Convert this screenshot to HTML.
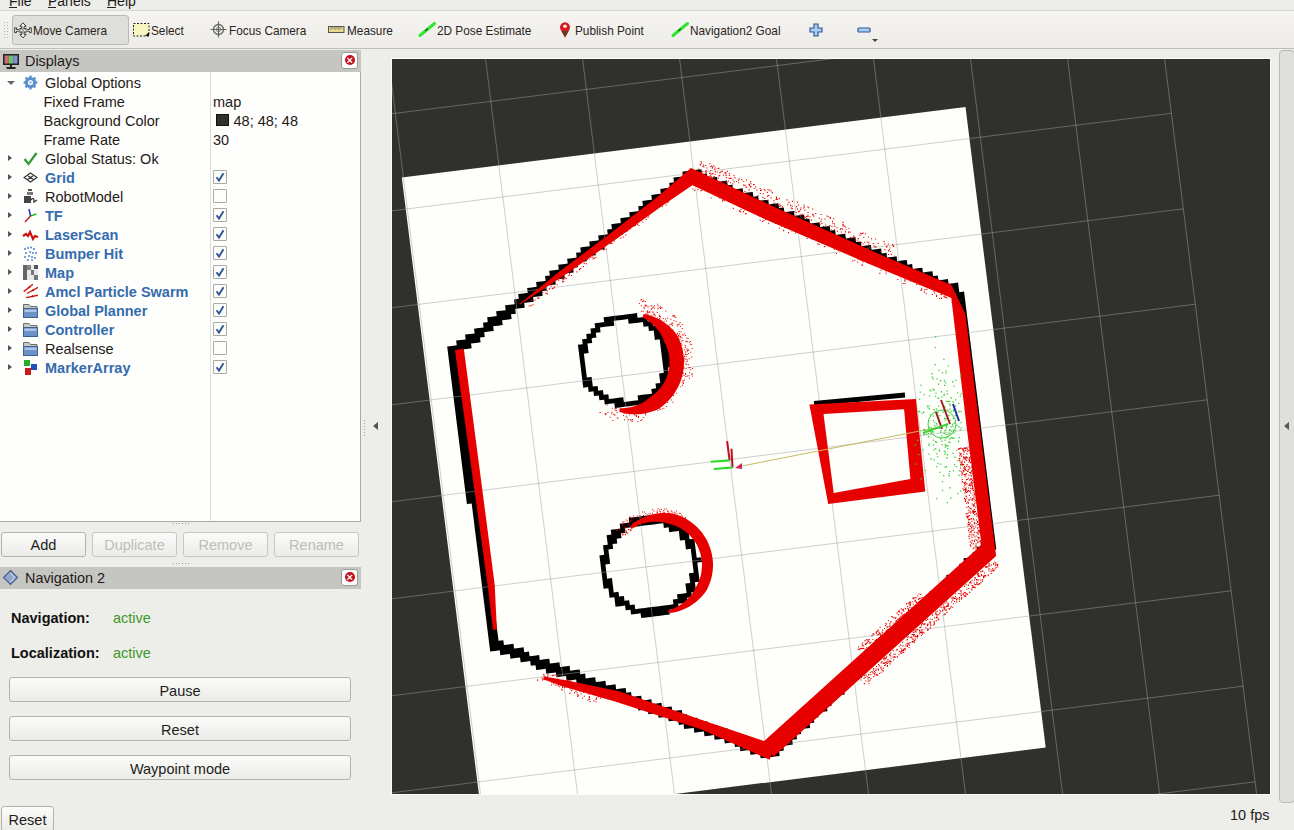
<!DOCTYPE html>
<html><head><meta charset="utf-8">
<style>
*{box-sizing:border-box;margin:0;padding:0}
html,body{width:1294px;height:830px;overflow:hidden;background:#edede9;font-family:"Liberation Sans",sans-serif;color:#1e1a17}
.a{position:absolute}
.t{position:absolute;white-space:nowrap;line-height:1}
#menubar{left:0;top:0;width:1294px;height:11px;background:#edede9;border-bottom:1px solid #d6d6d2}
#toolbar{left:0;top:11px;width:1294px;height:38px;background:linear-gradient(#f5f4f1,#edece8);border-bottom:1px solid #bdbdb9}
.tb{font-size:11.8px;color:#2a2522;transform:scaleY(1.1);transform-origin:0 0}
.btn{position:absolute;border:1px solid #b3b3ae;border-radius:3px;background:linear-gradient(#fbfbfa,#ebebe8);font-size:14.5px;color:#221d1a;text-align:center}
.btn.dis{color:#bdbdb9;border-color:#c6c6c2}
.title{position:absolute;left:0;width:361px;height:22px;background:#c5c5c1}
.close{position:absolute;width:17px;height:17px;border:1px solid #9a9a96;border-radius:3px;background:#fdfdfc}
.close::after{content:"";position:absolute;left:3px;top:2px;width:10px;height:10px;border-radius:50%;background:#c4101e}
.close::before{content:"\00d7";position:absolute;left:4.5px;top:-0.5px;font-size:11px;line-height:14px;color:#fff;z-index:2;font-weight:bold}
.tr{font-size:14.5px}
.bl{font-weight:bold;color:#356cae}
.arr{position:absolute;width:0;height:0;border-top:3.5px solid transparent;border-bottom:3.5px solid transparent;border-left:4px solid #555}
.arrd{position:absolute;width:0;height:0;border-left:4px solid transparent;border-right:4px solid transparent;border-top:4px solid #666}
.cb{position:absolute;left:213px;width:14px;height:14px;border:1px solid #a9a9a5;border-radius:1px;background:#fdfdfc}
.dots{position:absolute;width:16px;height:1px;background:repeating-linear-gradient(90deg,#9e9e9a 0 1px,transparent 1px 3px)}
</style></head><body>
<!-- menu bar -->
<div id="menubar" class="a">
  <div class="t" style="left:9px;top:-6px;font-size:14px">File</div>
  <div class="t" style="left:48px;top:-6px;font-size:14px">Panels</div>
  <div class="t" style="left:107px;top:-6px;font-size:14px">Help</div>
  <div class="a" style="left:9px;top:7px;width:8px;height:1px;background:#222"></div>
  <div class="a" style="left:48px;top:7px;width:8px;height:1px;background:#222"></div>
  <div class="a" style="left:107px;top:7px;width:9px;height:1px;background:#222"></div>
</div>
<!-- toolbar -->
<div id="toolbar" class="a">
  <svg class="a" style="left:3px;top:10px" width="6" height="19" viewBox="0 0 6 19"><rect x="1" y="1" width="1" height="1" fill="#b5b5b1"/><rect x="1" y="4" width="1" height="1" fill="#b5b5b1"/><rect x="1" y="7" width="1" height="1" fill="#b5b5b1"/><rect x="1" y="10" width="1" height="1" fill="#b5b5b1"/><rect x="1" y="13" width="1" height="1" fill="#b5b5b1"/><rect x="1" y="16" width="1" height="1" fill="#b5b5b1"/><rect x="4" y="1" width="1" height="1" fill="#b5b5b1"/><rect x="4" y="4" width="1" height="1" fill="#b5b5b1"/><rect x="4" y="7" width="1" height="1" fill="#b5b5b1"/><rect x="4" y="10" width="1" height="1" fill="#b5b5b1"/><rect x="4" y="13" width="1" height="1" fill="#b5b5b1"/><rect x="4" y="16" width="1" height="1" fill="#b5b5b1"/></svg>
  <div class="a" style="left:12px;top:4px;width:117px;height:30px;border:1px solid #b9b9b5;border-radius:3px;background:#dededb"></div>
  <div class="t tb" style="left:33px;top:14px">Move Camera</div>
  <div class="t tb" style="left:151px;top:14px">Select</div>
  <div class="t tb" style="left:229px;top:14px">Focus Camera</div>
  <div class="t tb" style="left:347px;top:14px">Measure</div>
  <div class="t tb" style="left:437px;top:14px">2D Pose Estimate</div>
  <div class="t tb" style="left:575px;top:14px">Publish Point</div>
  <div class="t tb" style="left:690px;top:14px">Navigation2 Goal</div>
  
<svg class="a" style="left:14px;top:11px" width="18" height="17" viewBox="0 0 18 17"><path d="M9 0.8 L12.2 4.2 L10.2 4.2 L10.2 6.2 Q12.5 6.5 13.2 7.5 L15.5 7.5 L15.5 5.8 L17.3 5.8 L17.3 10.6 L15.5 10.6 L15.5 9.2 L13.2 9.2 Q12.5 10.3 10.2 10.6 L10.2 12.4 L12.2 12.4 L9 15.9 L5.8 12.4 L7.8 12.4 L7.8 10.6 Q5.5 10.3 4.8 9.2 L2.5 9.2 L2.5 10.6 L0.7 10.6 L0.7 5.8 L2.5 5.8 L2.5 7.5 L4.8 7.5 Q5.5 6.5 7.8 6.2 L7.8 4.2 L5.8 4.2 Z" fill="#f4f4f2" stroke="#3a3a3a" stroke-width="1"/><ellipse cx="9" cy="8.4" rx="3.2" ry="1.6" fill="none" stroke="#555" stroke-width="0.8"/><path d="M9 5 V12" stroke="#999" stroke-width="1.4"/></svg>
<svg class="a" style="left:133px;top:12px" width="17" height="14" viewBox="0 0 17 14"><rect x="0.5" y="0.5" width="15.5" height="12.5" fill="#f7f5c0" stroke="#222" stroke-width="1" stroke-dasharray="2 1.5"/><path d="M16 9 L16 13 L12 13 Z" fill="#111"/></svg>
<svg class="a" style="left:210px;top:10px" width="17" height="17" viewBox="0 0 17 17"><circle cx="8.5" cy="8.5" r="5" fill="none" stroke="#666" stroke-width="1.3"/><circle cx="8.5" cy="8.5" r="2.2" fill="none" stroke="#888" stroke-width="1"/><path d="M8.5 0.5 V16.5 M0.5 8.5 H16.5" stroke="#666" stroke-width="1.2"/></svg>
<svg class="a" style="left:328px;top:15px" width="17" height="8" viewBox="0 0 17 8"><rect x="0.5" y="0.5" width="15.5" height="6" fill="#e8d890" stroke="#555" stroke-width="1"/><path d="M3 1 V4 M5 1 V3 M7 1 V4 M9 1 V3 M11 1 V4 M13 1 V3" stroke="#665" stroke-width="0.7"/></svg>
<svg class="a" style="left:418px;top:11px" width="18" height="15" viewBox="0 0 18 15"><path d="M2 13.5 L16.5 1.5" stroke="#2ee82e" stroke-width="3" stroke-linecap="round"/><path d="M7 9 L10 6.5" stroke="#1a6a1a" stroke-width="1.5"/></svg>
<svg class="a" style="left:559px;top:10px" width="12" height="17" viewBox="0 0 12 17"><path d="M6 16.5 L1.5 8.5 A5 5 0 1 1 10.5 8.5 Z" fill="#d41a2a"/><path d="M6 16.5 L2.5 10 L9.5 10 Z" fill="#6a3a20"/><circle cx="6" cy="5.2" r="1.8" fill="#f7f0d0"/></svg>
<svg class="a" style="left:671px;top:11px" width="18" height="15" viewBox="0 0 18 15"><path d="M2 13.5 L16.5 1.5" stroke="#2ee82e" stroke-width="3" stroke-linecap="round"/><path d="M7 9 L10 6.5" stroke="#1a6a1a" stroke-width="1.5"/></svg>
<svg class="a" style="left:809px;top:12px" width="14" height="14" viewBox="0 0 14 14"><path d="M5 1 H9 V5 H13 V9 H9 V13 H5 V9 H1 V5 H5 Z" fill="#a8cdf0" stroke="#2d5a98" stroke-width="1.2"/></svg>
<svg class="a" style="left:857px;top:16px" width="14" height="6" viewBox="0 0 14 6"><rect x="1" y="1" width="12" height="4" rx="0.8" fill="#a8cdf0" stroke="#2d5a98" stroke-width="1.2"/></svg>
<div class="a" style="left:872px;top:28px;width:0;height:0;border-left:3px solid transparent;border-right:3px solid transparent;border-top:3px solid #444"></div>

</div>
<!-- Displays panel -->
<div class="title" style="top:50px"></div>
<div class="t" style="left:25px;top:54px;font-size:14.4px">Displays</div>
<div class="close" style="left:341px;top:52px"></div>
<svg class="a" style="left:2px;top:53px" width="18" height="17" viewBox="0 0 18 17"><rect x="1" y="1" width="16" height="11" fill="#222"/><rect x="2.5" y="2.5" width="4.3" height="8" fill="#c87070"/><rect x="6.8" y="2.5" width="4.4" height="8" fill="#70c070"/><rect x="11.2" y="2.5" width="4.3" height="8" fill="#8090d0"/><rect x="8" y="12" width="2" height="2" fill="#222"/><rect x="4.5" y="14" width="9" height="2" fill="#222"/></svg>
<div class="a" style="left:0;top:72px;width:361px;height:450px;background:#fefefc;border-right:1px solid #a9a9a5;border-bottom:1px solid #a9a9a5"></div>
<div class="a" style="left:210px;top:72px;width:1px;height:449px;background:#dcdcd8"></div>
<div class="t tr" style="left:45px;top:76px">Global Options</div>
<div class="arrd" style="left:7px;top:81px"></div>
<svg class="a" style="left:22px;top:74px" width="17" height="17" viewBox="0 0 17 17"><g fill="#5b8fd0"><circle cx="8.5" cy="8.5" r="5.6"/><rect x="7.3" y="1.6" width="2.4" height="3" transform="rotate(0 8.5 8.5)"/><rect x="7.3" y="1.6" width="2.4" height="3" transform="rotate(45 8.5 8.5)"/><rect x="7.3" y="1.6" width="2.4" height="3" transform="rotate(90 8.5 8.5)"/><rect x="7.3" y="1.6" width="2.4" height="3" transform="rotate(135 8.5 8.5)"/><rect x="7.3" y="1.6" width="2.4" height="3" transform="rotate(180 8.5 8.5)"/><rect x="7.3" y="1.6" width="2.4" height="3" transform="rotate(225 8.5 8.5)"/><rect x="7.3" y="1.6" width="2.4" height="3" transform="rotate(270 8.5 8.5)"/><rect x="7.3" y="1.6" width="2.4" height="3" transform="rotate(315 8.5 8.5)"/></g><circle cx="8.5" cy="8.5" r="2.6" fill="#fefefc"/><circle cx="8.5" cy="8.5" r="1.4" fill="#a9c6ea"/></svg>
<div class="t tr" style="left:43.5px;top:95px">Fixed Frame</div>
<div class="t tr" style="left:213px;top:95px">map</div>
<div class="t tr" style="left:43.5px;top:114px">Background Color</div>
<div class="a" style="left:216px;top:114px;width:13px;height:12px;background:#30302e;border:1px solid #111"></div>
<div class="t tr" style="left:233.5px;top:114px">48; 48; 48</div>
<div class="t tr" style="left:43.5px;top:133px">Frame Rate</div>
<div class="t tr" style="left:213px;top:133px">30</div>
<div class="t tr" style="left:45px;top:152px">Global Status: Ok</div>
<div class="arr" style="left:8px;top:155px"></div>
<svg class="a" style="left:22px;top:150px" width="17" height="17" viewBox="0 0 17 17"><path d="M2.5 9 L6.5 14 L14.5 3" stroke="#2e9a2e" stroke-width="2.2" fill="none"/></svg>
<div class="t tr bl" style="left:45px;top:171px">Grid</div>
<div class="arr" style="left:8px;top:174px"></div>
<svg class="a" style="left:22px;top:169px" width="17" height="17" viewBox="0 0 17 17"><path d="M8.5 4 L15 8.5 L8.5 13 L2 8.5 Z M5.2 6.2 L11.8 10.8 M11.8 6.2 L5.2 10.8" stroke="#333" stroke-width="1.1" fill="none"/></svg>
<div class="cb" style="top:170px"></div>
<svg class="a" style="left:213px;top:170px" width="14" height="14" viewBox="0 0 14 14"><path d="M3.5 7.2 L6 10.5 L10.5 3.2" stroke="#2d5594" stroke-width="1.9" fill="none"/></svg>
<div class="t tr" style="left:45px;top:190px">RobotModel</div>
<div class="arr" style="left:8px;top:193px"></div>
<svg class="a" style="left:22px;top:188px" width="17" height="17" viewBox="0 0 17 17"><rect x="6" y="1" width="4" height="2" fill="#555"/><rect x="5" y="4" width="6" height="3" fill="#777"/><rect x="2" y="8" width="7" height="7" fill="#444"/><path d="M9 12 Q12 8 12 14 L15 12" stroke="#333" stroke-width="1.3" fill="none"/></svg>
<div class="cb" style="top:189px"></div>
<div class="t tr bl" style="left:45px;top:209px">TF</div>
<div class="arr" style="left:8px;top:212px"></div>
<svg class="a" style="left:22px;top:207px" width="17" height="17" viewBox="0 0 17 17"><path d="M8.5 9 L3 15" stroke="#d02020" stroke-width="1.5"/><path d="M8.5 9 L14.5 7" stroke="#20c020" stroke-width="1.5"/><path d="M8.5 9 L7 2" stroke="#2030c0" stroke-width="1.5"/></svg>
<div class="cb" style="top:208px"></div>
<svg class="a" style="left:213px;top:208px" width="14" height="14" viewBox="0 0 14 14"><path d="M3.5 7.2 L6 10.5 L10.5 3.2" stroke="#2d5594" stroke-width="1.9" fill="none"/></svg>
<div class="t tr bl" style="left:45px;top:228px">LaserScan</div>
<div class="arr" style="left:8px;top:231px"></div>
<svg class="a" style="left:22px;top:226px" width="17" height="17" viewBox="0 0 17 17"><path d="M1 10 L4 8 L6 10 L8 6 L11 13 L13 10 L16 11" stroke="#c81010" stroke-width="2.2" fill="none"/></svg>
<div class="cb" style="top:227px"></div>
<svg class="a" style="left:213px;top:227px" width="14" height="14" viewBox="0 0 14 14"><path d="M3.5 7.2 L6 10.5 L10.5 3.2" stroke="#2d5594" stroke-width="1.9" fill="none"/></svg>
<div class="t tr bl" style="left:45px;top:247px">Bumper Hit</div>
<div class="arr" style="left:8px;top:250px"></div>
<svg class="a" style="left:22px;top:245px" width="17" height="17" viewBox="0 0 17 17"><g fill="#3c78c0"><circle cx="3" cy="4" r="0.9"/><circle cx="6" cy="3" r="0.9"/><circle cx="9" cy="2.5" r="0.9"/><circle cx="12" cy="4" r="0.9"/><circle cx="4" cy="8" r="0.9"/><circle cx="8" cy="7" r="0.9"/><circle cx="11" cy="8" r="0.9"/><circle cx="14" cy="8" r="0.9"/><circle cx="3" cy="12" r="0.9"/><circle cx="7" cy="11" r="0.9"/><circle cx="10" cy="12" r="0.9"/><circle cx="13" cy="13" r="0.9"/><circle cx="6" cy="15" r="0.9"/><circle cx="10" cy="15" r="0.9"/></g></svg>
<div class="cb" style="top:246px"></div>
<svg class="a" style="left:213px;top:246px" width="14" height="14" viewBox="0 0 14 14"><path d="M3.5 7.2 L6 10.5 L10.5 3.2" stroke="#2d5594" stroke-width="1.9" fill="none"/></svg>
<div class="t tr bl" style="left:45px;top:266px">Map</div>
<div class="arr" style="left:8px;top:269px"></div>
<svg class="a" style="left:22px;top:264px" width="17" height="17" viewBox="0 0 17 17"><rect x="1" y="1" width="15" height="15" fill="#e8e8e8"/><rect x="1" y="1" width="4" height="15" fill="#666"/><rect x="5" y="1" width="4" height="5" fill="#888"/><rect x="12" y="1" width="4" height="4" fill="#555"/><rect x="9" y="6" width="3" height="5" fill="#777"/><rect x="12" y="11" width="4" height="5" fill="#777"/></svg>
<div class="cb" style="top:265px"></div>
<svg class="a" style="left:213px;top:265px" width="14" height="14" viewBox="0 0 14 14"><path d="M3.5 7.2 L6 10.5 L10.5 3.2" stroke="#2d5594" stroke-width="1.9" fill="none"/></svg>
<div class="t tr bl" style="left:45px;top:285px">Amcl Particle Swarm</div>
<div class="arr" style="left:8px;top:288px"></div>
<svg class="a" style="left:22px;top:283px" width="17" height="17" viewBox="0 0 17 17"><path d="M1.7 8.6 L10.9 1.2 M4.9 10.5 L16 4.4 M4 14.6 L16 12.3" stroke="#d01818" stroke-width="1.4"/><path d="M6 5.4 L8.5 4.8 L7.2 2.9 Z M9.8 8.3 L12.3 7.8 L11 6 Z M9 13.9 L11.5 14.2 L10.8 12 Z" fill="#a00"/></svg>
<div class="cb" style="top:284px"></div>
<svg class="a" style="left:213px;top:284px" width="14" height="14" viewBox="0 0 14 14"><path d="M3.5 7.2 L6 10.5 L10.5 3.2" stroke="#2d5594" stroke-width="1.9" fill="none"/></svg>
<div class="t tr bl" style="left:45px;top:304px">Global Planner</div>
<div class="arr" style="left:8px;top:307px"></div>
<svg class="a" style="left:22px;top:302px" width="17" height="17" viewBox="0 0 17 17"><path d="M1.5 2.5 L7 2.5 L8.5 4.5 L15 4.5 L15 15.5 L1.5 15.5 Z" fill="#c8c8c4" stroke="#6d6d6a" stroke-width="1"/><rect x="1.5" y="6.5" width="14" height="9" fill="#6a92c6" stroke="#3f5f8e" stroke-width="1"/><rect x="2.5" y="7.5" width="12" height="2.5" fill="#a9c4e6"/></svg>
<div class="cb" style="top:303px"></div>
<svg class="a" style="left:213px;top:303px" width="14" height="14" viewBox="0 0 14 14"><path d="M3.5 7.2 L6 10.5 L10.5 3.2" stroke="#2d5594" stroke-width="1.9" fill="none"/></svg>
<div class="t tr bl" style="left:45px;top:323px">Controller</div>
<div class="arr" style="left:8px;top:326px"></div>
<svg class="a" style="left:22px;top:321px" width="17" height="17" viewBox="0 0 17 17"><path d="M1.5 2.5 L7 2.5 L8.5 4.5 L15 4.5 L15 15.5 L1.5 15.5 Z" fill="#c8c8c4" stroke="#6d6d6a" stroke-width="1"/><rect x="1.5" y="6.5" width="14" height="9" fill="#6a92c6" stroke="#3f5f8e" stroke-width="1"/><rect x="2.5" y="7.5" width="12" height="2.5" fill="#a9c4e6"/></svg>
<div class="cb" style="top:322px"></div>
<svg class="a" style="left:213px;top:322px" width="14" height="14" viewBox="0 0 14 14"><path d="M3.5 7.2 L6 10.5 L10.5 3.2" stroke="#2d5594" stroke-width="1.9" fill="none"/></svg>
<div class="t tr" style="left:45px;top:342px">Realsense</div>
<div class="arr" style="left:8px;top:345px"></div>
<svg class="a" style="left:22px;top:340px" width="17" height="17" viewBox="0 0 17 17"><path d="M1.5 2.5 L7 2.5 L8.5 4.5 L15 4.5 L15 15.5 L1.5 15.5 Z" fill="#c8c8c4" stroke="#6d6d6a" stroke-width="1"/><rect x="1.5" y="6.5" width="14" height="9" fill="#6a92c6" stroke="#3f5f8e" stroke-width="1"/><rect x="2.5" y="7.5" width="12" height="2.5" fill="#a9c4e6"/></svg>
<div class="cb" style="top:341px"></div>
<div class="t tr bl" style="left:45px;top:361px">MarkerArray</div>
<div class="arr" style="left:8px;top:364px"></div>
<svg class="a" style="left:22px;top:359px" width="17" height="17" viewBox="0 0 17 17"><rect x="2" y="1" width="6" height="6" fill="#23b023"/><rect x="9" y="5" width="6" height="6" fill="#2050b8"/><rect x="3" y="9" width="6" height="7" fill="#c81a1a"/></svg>
<div class="cb" style="top:360px"></div>
<svg class="a" style="left:213px;top:360px" width="14" height="14" viewBox="0 0 14 14"><path d="M3.5 7.2 L6 10.5 L10.5 3.2" stroke="#2d5594" stroke-width="1.9" fill="none"/></svg>
<div class="dots" style="left:173px;top:523px"></div>
<div class="btn" style="left:1px;top:532px;width:85px;height:25px;padding-top:4px">Add</div>
<div class="btn dis" style="left:92px;top:532px;width:85px;height:25px;padding-top:4px">Duplicate</div>
<div class="btn dis" style="left:183px;top:532px;width:85px;height:25px;padding-top:4px">Remove</div>
<div class="btn dis" style="left:274px;top:532px;width:85px;height:25px;padding-top:4px">Rename</div>
<div class="dots" style="left:173px;top:563px"></div>
<!-- Navigation 2 panel -->
<div class="title" style="top:567px"></div>
<div class="t" style="left:25px;top:571px;font-size:14.4px">Navigation 2</div>
<div class="close" style="left:341px;top:569px"></div>
<svg class="a" style="left:2px;top:569px" width="17" height="17" viewBox="0 0 17 17"><path d="M8.5 1.5 L15.5 8.5 L8.5 15.5 L1.5 8.5 Z" fill="#8fa6cc" stroke="#4a5f88" stroke-width="1.2"/><path d="M8.5 4 L12.5 8.5 L8.5 13" stroke="#dfe6f2" stroke-width="1" fill="none"/></svg>
<div class="t" style="left:11px;top:611px;font-size:14.5px;font-weight:bold;color:#111">Navigation:</div>
<div class="t" style="left:113px;top:611px;font-size:14.5px;color:#3c9a2a">active</div>
<div class="t" style="left:11px;top:646px;font-size:14.5px;font-weight:bold;color:#111">Localization:</div>
<div class="t" style="left:113px;top:646px;font-size:14.5px;color:#3c9a2a">active</div>
<div class="btn" style="left:9px;top:677px;width:342px;height:25px;padding-top:5px">Pause</div>
<div class="btn" style="left:9px;top:716px;width:342px;height:25px;padding-top:5px">Reset</div>
<div class="btn" style="left:9px;top:755px;width:342px;height:25px;padding-top:5px">Waypoint mode</div>
<div class="btn" style="left:1px;top:806px;width:53px;height:26px;padding-top:5px">Reset</div>
<!-- splitter arrows -->
<div class="a" style="left:364px;top:420px;width:1px;height:16px;background:repeating-linear-gradient(#9e9e9a 0 1px,transparent 1px 3px)"></div>
<div class="a" style="left:373px;top:422px;width:0;height:0;border-top:4px solid transparent;border-bottom:4px solid transparent;border-right:5px solid #555"></div>
<div class="a" style="left:1279px;top:50px;width:16px;height:753px;border:1px solid #b9b9b5;border-radius:4px;background:#dfdfdc"></div>
<div class="a" style="left:1284px;top:422px;width:0;height:0;border-top:4px solid transparent;border-bottom:4px solid transparent;border-right:5px solid #555"></div>
<div class="a" style="left:391px;top:58px;width:880px;height:737px;background:#fbfbf9"></div>
<svg width="878" height="735" viewBox="392 59 878 735" style="position:absolute;left:392px;top:59px;display:block">
<rect x="392" y="59" width="878" height="735" fill="#30302d"/>
<path d="M401.8,177.6L965.5,107.1L1045.7,747.6L481.9,818.2Z" fill="#fefefb"/>
<path transform="matrix(95.5,-11.95,11.95,95.5,490.9,101.4)" d="M-0.767 2.471h0.05v0.05h-0.05zM-0.767 2.521h0.05v0.05h-0.05zM-0.767 2.571h0.05v0.05h-0.05zM-0.767 2.621h0.05v0.05h-0.05zM-0.767 2.671h0.05v0.05h-0.05zM-0.767 2.721h0.05v0.05h-0.05zM-0.767 2.771h0.05v0.05h-0.05zM-0.767 2.821h0.05v0.05h-0.05zM-0.767 2.871h0.05v0.05h-0.05zM-0.767 2.921h0.05v0.05h-0.05zM-0.767 2.971h0.05v0.05h-0.05zM-0.767 3.021h0.05v0.05h-0.05zM-0.767 3.071h0.05v0.05h-0.05zM-0.767 3.121h0.05v0.05h-0.05zM-0.767 3.171h0.05v0.05h-0.05zM-0.767 3.221h0.05v0.05h-0.05zM-0.767 3.271h0.05v0.05h-0.05zM-0.767 3.321h0.05v0.05h-0.05zM-0.767 3.371h0.05v0.05h-0.05zM-0.767 3.421h0.05v0.05h-0.05zM-0.767 3.471h0.05v0.05h-0.05zM-0.767 3.521h0.05v0.05h-0.05zM-0.767 3.571h0.05v0.05h-0.05zM-0.767 3.621h0.05v0.05h-0.05zM-0.767 3.671h0.05v0.05h-0.05zM-0.767 3.721h0.05v0.05h-0.05zM-0.767 3.771h0.05v0.05h-0.05zM-0.767 3.821h0.05v0.05h-0.05zM-0.767 3.871h0.05v0.05h-0.05zM-0.767 3.921h0.05v0.05h-0.05zM-0.767 3.971h0.05v0.05h-0.05zM-0.767 4.021h0.05v0.05h-0.05zM-0.767 4.071h0.05v0.05h-0.05zM-0.717 2.471h0.05v0.05h-0.05zM-0.717 2.521h0.05v0.05h-0.05zM-0.717 2.571h0.05v0.05h-0.05zM-0.717 2.621h0.05v0.05h-0.05zM-0.717 2.671h0.05v0.05h-0.05zM-0.717 2.721h0.05v0.05h-0.05zM-0.717 2.771h0.05v0.05h-0.05zM-0.717 2.821h0.05v0.05h-0.05zM-0.717 2.871h0.05v0.05h-0.05zM-0.717 2.921h0.05v0.05h-0.05zM-0.717 2.971h0.05v0.05h-0.05zM-0.717 3.021h0.05v0.05h-0.05zM-0.717 3.071h0.05v0.05h-0.05zM-0.717 3.121h0.05v0.05h-0.05zM-0.717 3.171h0.05v0.05h-0.05zM-0.717 3.221h0.05v0.05h-0.05zM-0.717 3.271h0.05v0.05h-0.05zM-0.717 3.321h0.05v0.05h-0.05zM-0.717 3.371h0.05v0.05h-0.05zM-0.717 3.421h0.05v0.05h-0.05zM-0.717 3.471h0.05v0.05h-0.05zM-0.717 3.521h0.05v0.05h-0.05zM-0.717 3.571h0.05v0.05h-0.05zM-0.717 3.621h0.05v0.05h-0.05zM-0.717 3.671h0.05v0.05h-0.05zM-0.717 3.721h0.05v0.05h-0.05zM-0.717 3.771h0.05v0.05h-0.05zM-0.717 3.821h0.05v0.05h-0.05zM-0.717 3.871h0.05v0.05h-0.05zM-0.717 3.921h0.05v0.05h-0.05zM-0.717 3.971h0.05v0.05h-0.05zM-0.717 4.021h0.05v0.05h-0.05zM-0.717 4.071h0.05v0.05h-0.05zM-0.717 4.121h0.05v0.05h-0.05zM-0.717 4.171h0.05v0.05h-0.05zM-0.717 4.221h0.05v0.05h-0.05zM-0.717 4.271h0.05v0.05h-0.05zM-0.717 4.321h0.05v0.05h-0.05zM-0.717 4.371h0.05v0.05h-0.05zM-0.717 4.421h0.05v0.05h-0.05zM-0.717 4.471h0.05v0.05h-0.05zM-0.717 4.521h0.05v0.05h-0.05zM-0.717 4.571h0.05v0.05h-0.05zM-0.717 4.621h0.05v0.05h-0.05zM-0.717 4.671h0.05v0.05h-0.05zM-0.717 4.721h0.05v0.05h-0.05zM-0.717 4.771h0.05v0.05h-0.05zM-0.717 4.821h0.05v0.05h-0.05zM-0.717 4.871h0.05v0.05h-0.05zM-0.717 4.921h0.05v0.05h-0.05zM-0.717 4.971h0.05v0.05h-0.05zM-0.717 5.021h0.05v0.05h-0.05zM-0.717 5.071h0.05v0.05h-0.05zM-0.717 5.121h0.05v0.05h-0.05zM-0.717 5.171h0.05v0.05h-0.05zM-0.717 5.221h0.05v0.05h-0.05zM-0.717 5.271h0.05v0.05h-0.05zM-0.717 5.321h0.05v0.05h-0.05zM-0.717 5.371h0.05v0.05h-0.05zM-0.717 5.421h0.05v0.05h-0.05zM-0.717 5.471h0.05v0.05h-0.05zM-0.717 5.521h0.05v0.05h-0.05zM-0.717 5.571h0.05v0.05h-0.05zM-0.717 5.621h0.05v0.05h-0.05zM-0.667 2.421h0.05v0.05h-0.05zM-0.667 2.471h0.05v0.05h-0.05zM-0.667 2.521h0.05v0.05h-0.05zM-0.667 3.471h0.05v0.05h-0.05zM-0.667 3.521h0.05v0.05h-0.05zM-0.667 3.571h0.05v0.05h-0.05zM-0.667 3.621h0.05v0.05h-0.05zM-0.667 3.671h0.05v0.05h-0.05zM-0.667 3.721h0.05v0.05h-0.05zM-0.667 3.771h0.05v0.05h-0.05zM-0.667 3.821h0.05v0.05h-0.05zM-0.667 3.871h0.05v0.05h-0.05zM-0.667 3.921h0.05v0.05h-0.05zM-0.667 3.971h0.05v0.05h-0.05zM-0.667 4.021h0.05v0.05h-0.05zM-0.667 4.071h0.05v0.05h-0.05zM-0.667 4.121h0.05v0.05h-0.05zM-0.667 4.171h0.05v0.05h-0.05zM-0.667 4.221h0.05v0.05h-0.05zM-0.667 4.271h0.05v0.05h-0.05zM-0.667 4.321h0.05v0.05h-0.05zM-0.667 4.371h0.05v0.05h-0.05zM-0.667 4.421h0.05v0.05h-0.05zM-0.667 4.471h0.05v0.05h-0.05zM-0.667 4.521h0.05v0.05h-0.05zM-0.667 4.571h0.05v0.05h-0.05zM-0.667 4.621h0.05v0.05h-0.05zM-0.667 4.671h0.05v0.05h-0.05zM-0.667 4.721h0.05v0.05h-0.05zM-0.667 4.771h0.05v0.05h-0.05zM-0.667 4.821h0.05v0.05h-0.05zM-0.667 4.871h0.05v0.05h-0.05zM-0.667 4.921h0.05v0.05h-0.05zM-0.667 4.971h0.05v0.05h-0.05zM-0.667 5.021h0.05v0.05h-0.05zM-0.667 5.071h0.05v0.05h-0.05zM-0.667 5.121h0.05v0.05h-0.05zM-0.667 5.171h0.05v0.05h-0.05zM-0.667 5.221h0.05v0.05h-0.05zM-0.667 5.271h0.05v0.05h-0.05zM-0.667 5.321h0.05v0.05h-0.05zM-0.667 5.371h0.05v0.05h-0.05zM-0.667 5.421h0.05v0.05h-0.05zM-0.667 5.471h0.05v0.05h-0.05zM-0.667 5.521h0.05v0.05h-0.05zM-0.667 5.571h0.05v0.05h-0.05zM-0.667 5.621h0.05v0.05h-0.05zM-0.617 2.421h0.05v0.05h-0.05zM-0.617 2.471h0.05v0.05h-0.05zM-0.617 5.571h0.05v0.05h-0.05zM-0.617 5.621h0.05v0.05h-0.05zM-0.617 5.671h0.05v0.05h-0.05zM-0.567 2.371h0.05v0.05h-0.05zM-0.567 2.421h0.05v0.05h-0.05zM-0.567 2.471h0.05v0.05h-0.05zM-0.567 5.621h0.05v0.05h-0.05zM-0.567 5.671h0.05v0.05h-0.05zM-0.517 2.371h0.05v0.05h-0.05zM-0.517 2.421h0.05v0.05h-0.05zM-0.517 5.621h0.05v0.05h-0.05zM-0.517 5.671h0.05v0.05h-0.05zM-0.517 5.721h0.05v0.05h-0.05zM-0.467 2.321h0.05v0.05h-0.05zM-0.467 2.371h0.05v0.05h-0.05zM-0.467 2.421h0.05v0.05h-0.05zM-0.467 5.671h0.05v0.05h-0.05zM-0.467 5.721h0.05v0.05h-0.05zM-0.417 2.321h0.05v0.05h-0.05zM-0.417 2.371h0.05v0.05h-0.05zM-0.417 5.671h0.05v0.05h-0.05zM-0.417 5.721h0.05v0.05h-0.05zM-0.417 5.771h0.05v0.05h-0.05zM-0.367 2.271h0.05v0.05h-0.05zM-0.367 2.321h0.05v0.05h-0.05zM-0.367 5.721h0.05v0.05h-0.05zM-0.367 5.771h0.05v0.05h-0.05zM-0.317 2.221h0.05v0.05h-0.05zM-0.317 2.271h0.05v0.05h-0.05zM-0.317 2.321h0.05v0.05h-0.05zM-0.317 5.771h0.05v0.05h-0.05zM-0.317 5.821h0.05v0.05h-0.05zM-0.267 2.221h0.05v0.05h-0.05zM-0.267 2.271h0.05v0.05h-0.05zM-0.267 5.771h0.05v0.05h-0.05zM-0.267 5.821h0.05v0.05h-0.05zM-0.267 5.871h0.05v0.05h-0.05zM-0.217 2.171h0.05v0.05h-0.05zM-0.217 2.221h0.05v0.05h-0.05zM-0.217 2.271h0.05v0.05h-0.05zM-0.217 5.821h0.05v0.05h-0.05zM-0.217 5.871h0.05v0.05h-0.05zM-0.167 2.171h0.05v0.05h-0.05zM-0.167 2.221h0.05v0.05h-0.05zM-0.167 5.821h0.05v0.05h-0.05zM-0.167 5.871h0.05v0.05h-0.05zM-0.167 5.921h0.05v0.05h-0.05zM-0.117 2.121h0.05v0.05h-0.05zM-0.117 2.171h0.05v0.05h-0.05zM-0.117 2.221h0.05v0.05h-0.05zM-0.117 5.871h0.05v0.05h-0.05zM-0.117 5.921h0.05v0.05h-0.05zM-0.067 2.121h0.05v0.05h-0.05zM-0.067 2.171h0.05v0.05h-0.05zM-0.067 5.871h0.05v0.05h-0.05zM-0.067 5.921h0.05v0.05h-0.05zM-0.067 5.971h0.05v0.05h-0.05zM-0.017 2.071h0.05v0.05h-0.05zM-0.017 2.121h0.05v0.05h-0.05zM-0.017 5.921h0.05v0.05h-0.05zM-0.017 5.971h0.05v0.05h-0.05zM0.033 2.021h0.05v0.05h-0.05zM0.033 2.071h0.05v0.05h-0.05zM0.033 2.121h0.05v0.05h-0.05zM0.033 5.921h0.05v0.05h-0.05zM0.033 5.971h0.05v0.05h-0.05zM0.033 6.021h0.05v0.05h-0.05zM0.083 2.021h0.05v0.05h-0.05zM0.083 2.071h0.05v0.05h-0.05zM0.083 5.971h0.05v0.05h-0.05zM0.083 6.021h0.05v0.05h-0.05zM0.133 1.971h0.05v0.05h-0.05zM0.133 2.021h0.05v0.05h-0.05zM0.133 2.071h0.05v0.05h-0.05zM0.133 5.971h0.05v0.05h-0.05zM0.133 6.021h0.05v0.05h-0.05zM0.133 6.071h0.05v0.05h-0.05zM0.183 1.971h0.05v0.05h-0.05zM0.183 2.021h0.05v0.05h-0.05zM0.183 6.021h0.05v0.05h-0.05zM0.183 6.071h0.05v0.05h-0.05zM0.183 6.121h0.05v0.05h-0.05zM0.233 1.921h0.05v0.05h-0.05zM0.233 1.971h0.05v0.05h-0.05zM0.233 2.021h0.05v0.05h-0.05zM0.233 6.071h0.05v0.05h-0.05zM0.233 6.121h0.05v0.05h-0.05zM0.283 1.921h0.05v0.05h-0.05zM0.283 1.971h0.05v0.05h-0.05zM0.283 6.071h0.05v0.05h-0.05zM0.283 6.121h0.05v0.05h-0.05zM0.283 6.171h0.05v0.05h-0.05zM0.333 1.871h0.05v0.05h-0.05zM0.333 1.921h0.05v0.05h-0.05zM0.333 6.121h0.05v0.05h-0.05zM0.333 6.171h0.05v0.05h-0.05zM0.383 1.821h0.05v0.05h-0.05zM0.383 1.871h0.05v0.05h-0.05zM0.383 1.921h0.05v0.05h-0.05zM0.383 6.121h0.05v0.05h-0.05zM0.383 6.171h0.05v0.05h-0.05zM0.383 6.221h0.05v0.05h-0.05zM0.433 1.821h0.05v0.05h-0.05zM0.433 1.871h0.05v0.05h-0.05zM0.433 6.171h0.05v0.05h-0.05zM0.433 6.221h0.05v0.05h-0.05zM0.483 1.771h0.05v0.05h-0.05zM0.483 1.821h0.05v0.05h-0.05zM0.483 1.871h0.05v0.05h-0.05zM0.483 6.171h0.05v0.05h-0.05zM0.483 6.221h0.05v0.05h-0.05zM0.483 6.271h0.05v0.05h-0.05zM0.533 1.771h0.05v0.05h-0.05zM0.533 1.821h0.05v0.05h-0.05zM0.533 4.821h0.05v0.05h-0.05zM0.533 4.871h0.05v0.05h-0.05zM0.533 4.921h0.05v0.05h-0.05zM0.533 4.971h0.05v0.05h-0.05zM0.533 5.021h0.05v0.05h-0.05zM0.533 5.071h0.05v0.05h-0.05zM0.533 5.121h0.05v0.05h-0.05zM0.533 6.221h0.05v0.05h-0.05zM0.533 6.271h0.05v0.05h-0.05zM0.583 1.721h0.05v0.05h-0.05zM0.583 1.771h0.05v0.05h-0.05zM0.583 1.821h0.05v0.05h-0.05zM0.583 2.621h0.05v0.05h-0.05zM0.583 2.671h0.05v0.05h-0.05zM0.583 2.721h0.05v0.05h-0.05zM0.583 2.771h0.05v0.05h-0.05zM0.583 2.821h0.05v0.05h-0.05zM0.583 2.871h0.05v0.05h-0.05zM0.583 2.921h0.05v0.05h-0.05zM0.583 2.971h0.05v0.05h-0.05zM0.583 3.021h0.05v0.05h-0.05zM0.583 4.721h0.05v0.05h-0.05zM0.583 4.771h0.05v0.05h-0.05zM0.583 4.821h0.05v0.05h-0.05zM0.583 4.871h0.05v0.05h-0.05zM0.583 5.071h0.05v0.05h-0.05zM0.583 5.121h0.05v0.05h-0.05zM0.583 5.171h0.05v0.05h-0.05zM0.583 5.221h0.05v0.05h-0.05zM0.583 6.221h0.05v0.05h-0.05zM0.583 6.271h0.05v0.05h-0.05zM0.583 6.321h0.05v0.05h-0.05zM0.633 1.721h0.05v0.05h-0.05zM0.633 1.771h0.05v0.05h-0.05zM0.633 2.571h0.05v0.05h-0.05zM0.633 2.621h0.05v0.05h-0.05zM0.633 2.671h0.05v0.05h-0.05zM0.633 2.971h0.05v0.05h-0.05zM0.633 3.021h0.05v0.05h-0.05zM0.633 3.071h0.05v0.05h-0.05zM0.633 4.621h0.05v0.05h-0.05zM0.633 4.671h0.05v0.05h-0.05zM0.633 4.721h0.05v0.05h-0.05zM0.633 5.221h0.05v0.05h-0.05zM0.633 5.271h0.05v0.05h-0.05zM0.633 5.321h0.05v0.05h-0.05zM0.633 6.271h0.05v0.05h-0.05zM0.633 6.321h0.05v0.05h-0.05zM0.683 1.671h0.05v0.05h-0.05zM0.683 1.721h0.05v0.05h-0.05zM0.683 2.521h0.05v0.05h-0.05zM0.683 2.571h0.05v0.05h-0.05zM0.683 3.071h0.05v0.05h-0.05zM0.683 3.121h0.05v0.05h-0.05zM0.683 4.571h0.05v0.05h-0.05zM0.683 4.621h0.05v0.05h-0.05zM0.683 4.671h0.05v0.05h-0.05zM0.683 5.271h0.05v0.05h-0.05zM0.683 5.321h0.05v0.05h-0.05zM0.683 6.321h0.05v0.05h-0.05zM0.683 6.371h0.05v0.05h-0.05zM0.733 1.621h0.05v0.05h-0.05zM0.733 1.671h0.05v0.05h-0.05zM0.733 1.721h0.05v0.05h-0.05zM0.733 2.471h0.05v0.05h-0.05zM0.733 2.521h0.05v0.05h-0.05zM0.733 3.121h0.05v0.05h-0.05zM0.733 3.171h0.05v0.05h-0.05zM0.733 4.571h0.05v0.05h-0.05zM0.733 4.621h0.05v0.05h-0.05zM0.733 5.321h0.05v0.05h-0.05zM0.733 5.371h0.05v0.05h-0.05zM0.733 6.321h0.05v0.05h-0.05zM0.733 6.371h0.05v0.05h-0.05zM0.733 6.421h0.05v0.05h-0.05zM0.783 1.621h0.05v0.05h-0.05zM0.783 1.671h0.05v0.05h-0.05zM0.783 2.421h0.05v0.05h-0.05zM0.783 2.471h0.05v0.05h-0.05zM0.783 3.171h0.05v0.05h-0.05zM0.783 3.221h0.05v0.05h-0.05zM0.783 4.521h0.05v0.05h-0.05zM0.783 4.571h0.05v0.05h-0.05zM0.783 5.371h0.05v0.05h-0.05zM0.783 5.421h0.05v0.05h-0.05zM0.783 6.371h0.05v0.05h-0.05zM0.783 6.421h0.05v0.05h-0.05zM0.833 1.571h0.05v0.05h-0.05zM0.833 1.621h0.05v0.05h-0.05zM0.833 1.671h0.05v0.05h-0.05zM0.833 2.421h0.05v0.05h-0.05zM0.833 3.221h0.05v0.05h-0.05zM0.833 4.521h0.05v0.05h-0.05zM0.833 5.421h0.05v0.05h-0.05zM0.833 6.371h0.05v0.05h-0.05zM0.833 6.421h0.05v0.05h-0.05zM0.833 6.471h0.05v0.05h-0.05zM0.883 1.571h0.05v0.05h-0.05zM0.883 1.621h0.05v0.05h-0.05zM0.883 2.371h0.05v0.05h-0.05zM0.883 2.421h0.05v0.05h-0.05zM0.883 3.221h0.05v0.05h-0.05zM0.883 3.271h0.05v0.05h-0.05zM0.883 4.471h0.05v0.05h-0.05zM0.883 4.521h0.05v0.05h-0.05zM0.883 5.421h0.05v0.05h-0.05zM0.883 5.471h0.05v0.05h-0.05zM0.883 6.421h0.05v0.05h-0.05zM0.883 6.471h0.05v0.05h-0.05zM0.933 1.521h0.05v0.05h-0.05zM0.933 1.571h0.05v0.05h-0.05zM0.933 1.621h0.05v0.05h-0.05zM0.933 2.371h0.05v0.05h-0.05zM0.933 2.421h0.05v0.05h-0.05zM0.933 3.221h0.05v0.05h-0.05zM0.933 3.271h0.05v0.05h-0.05zM0.933 4.471h0.05v0.05h-0.05zM0.933 4.521h0.05v0.05h-0.05zM0.933 5.421h0.05v0.05h-0.05zM0.933 5.471h0.05v0.05h-0.05zM0.933 6.421h0.05v0.05h-0.05zM0.933 6.471h0.05v0.05h-0.05zM0.933 6.521h0.05v0.05h-0.05zM0.983 1.521h0.05v0.05h-0.05zM0.983 1.571h0.05v0.05h-0.05zM0.983 2.371h0.05v0.05h-0.05zM0.983 3.271h0.05v0.05h-0.05zM0.983 4.471h0.05v0.05h-0.05zM0.983 4.521h0.05v0.05h-0.05zM0.983 5.421h0.05v0.05h-0.05zM0.983 5.471h0.05v0.05h-0.05zM0.983 6.471h0.05v0.05h-0.05zM0.983 6.521h0.05v0.05h-0.05zM1.033 1.471h0.05v0.05h-0.05zM1.033 1.521h0.05v0.05h-0.05zM1.033 2.371h0.05v0.05h-0.05zM1.033 3.271h0.05v0.05h-0.05zM1.033 4.471h0.05v0.05h-0.05zM1.033 4.521h0.05v0.05h-0.05zM1.033 5.421h0.05v0.05h-0.05zM1.033 5.471h0.05v0.05h-0.05zM1.033 6.471h0.05v0.05h-0.05zM1.033 6.521h0.05v0.05h-0.05zM1.033 6.571h0.05v0.05h-0.05zM1.083 1.421h0.05v0.05h-0.05zM1.083 1.471h0.05v0.05h-0.05zM1.083 1.521h0.05v0.05h-0.05zM1.083 2.371h0.05v0.05h-0.05zM1.083 3.271h0.05v0.05h-0.05zM1.083 4.471h0.05v0.05h-0.05zM1.083 4.521h0.05v0.05h-0.05zM1.083 5.421h0.05v0.05h-0.05zM1.083 5.471h0.05v0.05h-0.05zM1.083 6.521h0.05v0.05h-0.05zM1.083 6.571h0.05v0.05h-0.05zM1.133 1.421h0.05v0.05h-0.05zM1.133 1.471h0.05v0.05h-0.05zM1.133 2.371h0.05v0.05h-0.05zM1.133 2.421h0.05v0.05h-0.05zM1.133 3.221h0.05v0.05h-0.05zM1.133 3.271h0.05v0.05h-0.05zM1.133 4.471h0.05v0.05h-0.05zM1.133 4.521h0.05v0.05h-0.05zM1.133 5.421h0.05v0.05h-0.05zM1.133 5.471h0.05v0.05h-0.05zM1.133 6.521h0.05v0.05h-0.05zM1.133 6.571h0.05v0.05h-0.05zM1.133 6.621h0.05v0.05h-0.05zM1.183 1.371h0.05v0.05h-0.05zM1.183 1.421h0.05v0.05h-0.05zM1.183 1.471h0.05v0.05h-0.05zM1.183 2.371h0.05v0.05h-0.05zM1.183 2.421h0.05v0.05h-0.05zM1.183 3.221h0.05v0.05h-0.05zM1.183 3.271h0.05v0.05h-0.05zM1.183 4.521h0.05v0.05h-0.05zM1.183 5.421h0.05v0.05h-0.05zM1.183 6.571h0.05v0.05h-0.05zM1.183 6.621h0.05v0.05h-0.05zM1.183 6.671h0.05v0.05h-0.05zM1.233 1.371h0.05v0.05h-0.05zM1.233 1.421h0.05v0.05h-0.05zM1.233 2.421h0.05v0.05h-0.05zM1.233 3.221h0.05v0.05h-0.05zM1.233 4.521h0.05v0.05h-0.05zM1.233 4.571h0.05v0.05h-0.05zM1.233 5.371h0.05v0.05h-0.05zM1.233 5.421h0.05v0.05h-0.05zM1.233 6.621h0.05v0.05h-0.05zM1.233 6.671h0.05v0.05h-0.05zM1.283 1.321h0.05v0.05h-0.05zM1.283 1.371h0.05v0.05h-0.05zM1.283 1.421h0.05v0.05h-0.05zM1.283 2.421h0.05v0.05h-0.05zM1.283 2.471h0.05v0.05h-0.05zM1.283 3.171h0.05v0.05h-0.05zM1.283 3.221h0.05v0.05h-0.05zM1.283 4.571h0.05v0.05h-0.05zM1.283 4.621h0.05v0.05h-0.05zM1.283 5.321h0.05v0.05h-0.05zM1.283 5.371h0.05v0.05h-0.05zM1.283 6.621h0.05v0.05h-0.05zM1.283 6.671h0.05v0.05h-0.05zM1.283 6.721h0.05v0.05h-0.05zM1.333 1.321h0.05v0.05h-0.05zM1.333 1.371h0.05v0.05h-0.05zM1.333 2.471h0.05v0.05h-0.05zM1.333 2.521h0.05v0.05h-0.05zM1.333 3.121h0.05v0.05h-0.05zM1.333 3.171h0.05v0.05h-0.05zM1.333 4.571h0.05v0.05h-0.05zM1.333 4.621h0.05v0.05h-0.05zM1.333 5.321h0.05v0.05h-0.05zM1.333 5.371h0.05v0.05h-0.05zM1.333 6.671h0.05v0.05h-0.05zM1.333 6.721h0.05v0.05h-0.05zM1.383 1.271h0.05v0.05h-0.05zM1.383 1.321h0.05v0.05h-0.05zM1.383 2.521h0.05v0.05h-0.05zM1.383 2.571h0.05v0.05h-0.05zM1.383 2.621h0.05v0.05h-0.05zM1.383 3.021h0.05v0.05h-0.05zM1.383 3.071h0.05v0.05h-0.05zM1.383 3.121h0.05v0.05h-0.05zM1.383 4.621h0.05v0.05h-0.05zM1.383 4.671h0.05v0.05h-0.05zM1.383 4.721h0.05v0.05h-0.05zM1.383 5.221h0.05v0.05h-0.05zM1.383 5.271h0.05v0.05h-0.05zM1.383 5.321h0.05v0.05h-0.05zM1.383 6.671h0.05v0.05h-0.05zM1.383 6.721h0.05v0.05h-0.05zM1.383 6.771h0.05v0.05h-0.05zM1.433 1.221h0.05v0.05h-0.05zM1.433 1.271h0.05v0.05h-0.05zM1.433 1.321h0.05v0.05h-0.05zM1.433 2.571h0.05v0.05h-0.05zM1.433 2.621h0.05v0.05h-0.05zM1.433 2.671h0.05v0.05h-0.05zM1.433 2.721h0.05v0.05h-0.05zM1.433 2.771h0.05v0.05h-0.05zM1.433 2.821h0.05v0.05h-0.05zM1.433 2.871h0.05v0.05h-0.05zM1.433 2.921h0.05v0.05h-0.05zM1.433 2.971h0.05v0.05h-0.05zM1.433 3.021h0.05v0.05h-0.05zM1.433 3.071h0.05v0.05h-0.05zM1.433 4.671h0.05v0.05h-0.05zM1.433 4.721h0.05v0.05h-0.05zM1.433 4.771h0.05v0.05h-0.05zM1.433 4.821h0.05v0.05h-0.05zM1.433 5.121h0.05v0.05h-0.05zM1.433 5.171h0.05v0.05h-0.05zM1.433 5.221h0.05v0.05h-0.05zM1.433 5.271h0.05v0.05h-0.05zM1.433 6.721h0.05v0.05h-0.05zM1.433 6.771h0.05v0.05h-0.05zM1.483 1.221h0.05v0.05h-0.05zM1.483 1.271h0.05v0.05h-0.05zM1.483 2.721h0.05v0.05h-0.05zM1.483 2.771h0.05v0.05h-0.05zM1.483 2.821h0.05v0.05h-0.05zM1.483 2.871h0.05v0.05h-0.05zM1.483 2.921h0.05v0.05h-0.05zM1.483 4.771h0.05v0.05h-0.05zM1.483 4.821h0.05v0.05h-0.05zM1.483 4.871h0.05v0.05h-0.05zM1.483 4.921h0.05v0.05h-0.05zM1.483 4.971h0.05v0.05h-0.05zM1.483 5.021h0.05v0.05h-0.05zM1.483 5.071h0.05v0.05h-0.05zM1.483 5.121h0.05v0.05h-0.05zM1.483 5.171h0.05v0.05h-0.05zM1.483 6.721h0.05v0.05h-0.05zM1.483 6.771h0.05v0.05h-0.05zM1.483 6.821h0.05v0.05h-0.05zM1.533 1.171h0.05v0.05h-0.05zM1.533 1.221h0.05v0.05h-0.05zM1.533 1.271h0.05v0.05h-0.05zM1.533 4.971h0.05v0.05h-0.05zM1.533 6.771h0.05v0.05h-0.05zM1.533 6.821h0.05v0.05h-0.05zM1.583 1.171h0.05v0.05h-0.05zM1.583 1.221h0.05v0.05h-0.05zM1.583 6.771h0.05v0.05h-0.05zM1.583 6.821h0.05v0.05h-0.05zM1.583 6.871h0.05v0.05h-0.05zM1.633 1.121h0.05v0.05h-0.05zM1.633 1.171h0.05v0.05h-0.05zM1.633 1.221h0.05v0.05h-0.05zM1.633 6.821h0.05v0.05h-0.05zM1.633 6.871h0.05v0.05h-0.05zM1.683 1.121h0.05v0.05h-0.05zM1.683 1.171h0.05v0.05h-0.05zM1.683 6.871h0.05v0.05h-0.05zM1.683 6.921h0.05v0.05h-0.05zM1.733 1.071h0.05v0.05h-0.05zM1.733 1.121h0.05v0.05h-0.05zM1.733 6.871h0.05v0.05h-0.05zM1.733 6.921h0.05v0.05h-0.05zM1.733 6.971h0.05v0.05h-0.05zM1.783 1.021h0.05v0.05h-0.05zM1.783 1.071h0.05v0.05h-0.05zM1.783 1.121h0.05v0.05h-0.05zM1.783 6.921h0.05v0.05h-0.05zM1.783 6.971h0.05v0.05h-0.05zM1.833 1.021h0.05v0.05h-0.05zM1.833 1.071h0.05v0.05h-0.05zM1.833 6.921h0.05v0.05h-0.05zM1.833 6.971h0.05v0.05h-0.05zM1.833 7.021h0.05v0.05h-0.05zM1.883 0.971h0.05v0.05h-0.05zM1.883 1.021h0.05v0.05h-0.05zM1.883 1.071h0.05v0.05h-0.05zM1.883 6.971h0.05v0.05h-0.05zM1.883 7.021h0.05v0.05h-0.05zM1.933 0.971h0.05v0.05h-0.05zM1.933 1.021h0.05v0.05h-0.05zM1.933 6.971h0.05v0.05h-0.05zM1.933 7.021h0.05v0.05h-0.05zM1.933 7.071h0.05v0.05h-0.05zM1.983 0.971h0.05v0.05h-0.05zM1.983 1.021h0.05v0.05h-0.05zM1.983 7.021h0.05v0.05h-0.05zM1.983 7.071h0.05v0.05h-0.05zM2.033 0.971h0.05v0.05h-0.05zM2.033 1.021h0.05v0.05h-0.05zM2.033 1.071h0.05v0.05h-0.05zM2.033 7.021h0.05v0.05h-0.05zM2.033 7.071h0.05v0.05h-0.05zM2.083 1.021h0.05v0.05h-0.05zM2.083 1.071h0.05v0.05h-0.05zM2.083 1.121h0.05v0.05h-0.05zM2.083 6.971h0.05v0.05h-0.05zM2.083 7.021h0.05v0.05h-0.05zM2.083 7.071h0.05v0.05h-0.05zM2.133 1.071h0.05v0.05h-0.05zM2.133 1.121h0.05v0.05h-0.05zM2.133 6.921h0.05v0.05h-0.05zM2.133 6.971h0.05v0.05h-0.05zM2.133 7.021h0.05v0.05h-0.05zM2.183 1.071h0.05v0.05h-0.05zM2.183 1.121h0.05v0.05h-0.05zM2.183 1.171h0.05v0.05h-0.05zM2.183 6.921h0.05v0.05h-0.05zM2.183 6.971h0.05v0.05h-0.05zM2.233 1.121h0.05v0.05h-0.05zM2.233 1.171h0.05v0.05h-0.05zM2.233 6.871h0.05v0.05h-0.05zM2.233 6.921h0.05v0.05h-0.05zM2.233 6.971h0.05v0.05h-0.05zM2.283 1.121h0.05v0.05h-0.05zM2.283 1.171h0.05v0.05h-0.05zM2.283 1.221h0.05v0.05h-0.05zM2.283 6.821h0.05v0.05h-0.05zM2.283 6.871h0.05v0.05h-0.05zM2.283 6.921h0.05v0.05h-0.05zM2.333 1.171h0.05v0.05h-0.05zM2.333 1.221h0.05v0.05h-0.05zM2.333 1.271h0.05v0.05h-0.05zM2.333 6.771h0.05v0.05h-0.05zM2.333 6.821h0.05v0.05h-0.05zM2.333 6.871h0.05v0.05h-0.05zM2.383 1.221h0.05v0.05h-0.05zM2.383 1.271h0.05v0.05h-0.05zM2.383 6.771h0.05v0.05h-0.05zM2.383 6.821h0.05v0.05h-0.05zM2.433 1.221h0.05v0.05h-0.05zM2.433 1.271h0.05v0.05h-0.05zM2.433 1.321h0.05v0.05h-0.05zM2.433 6.721h0.05v0.05h-0.05zM2.433 6.771h0.05v0.05h-0.05zM2.433 6.821h0.05v0.05h-0.05zM2.483 1.271h0.05v0.05h-0.05zM2.483 1.321h0.05v0.05h-0.05zM2.483 6.671h0.05v0.05h-0.05zM2.483 6.721h0.05v0.05h-0.05zM2.483 6.771h0.05v0.05h-0.05zM2.533 1.271h0.05v0.05h-0.05zM2.533 1.321h0.05v0.05h-0.05zM2.533 1.371h0.05v0.05h-0.05zM2.533 6.621h0.05v0.05h-0.05zM2.533 6.671h0.05v0.05h-0.05zM2.533 6.721h0.05v0.05h-0.05zM2.583 1.321h0.05v0.05h-0.05zM2.583 1.371h0.05v0.05h-0.05zM2.583 1.421h0.05v0.05h-0.05zM2.583 6.621h0.05v0.05h-0.05zM2.583 6.671h0.05v0.05h-0.05zM2.633 1.371h0.05v0.05h-0.05zM2.633 1.421h0.05v0.05h-0.05zM2.633 6.571h0.05v0.05h-0.05zM2.633 6.621h0.05v0.05h-0.05zM2.633 6.671h0.05v0.05h-0.05zM2.683 1.371h0.05v0.05h-0.05zM2.683 1.421h0.05v0.05h-0.05zM2.683 1.471h0.05v0.05h-0.05zM2.683 6.521h0.05v0.05h-0.05zM2.683 6.571h0.05v0.05h-0.05zM2.683 6.621h0.05v0.05h-0.05zM2.733 1.421h0.05v0.05h-0.05zM2.733 1.471h0.05v0.05h-0.05zM2.733 6.471h0.05v0.05h-0.05zM2.733 6.521h0.05v0.05h-0.05zM2.733 6.571h0.05v0.05h-0.05zM2.783 1.421h0.05v0.05h-0.05zM2.783 1.471h0.05v0.05h-0.05zM2.783 1.521h0.05v0.05h-0.05zM2.783 6.471h0.05v0.05h-0.05zM2.783 6.521h0.05v0.05h-0.05zM2.833 1.471h0.05v0.05h-0.05zM2.833 1.521h0.05v0.05h-0.05zM2.833 1.571h0.05v0.05h-0.05zM2.833 6.421h0.05v0.05h-0.05zM2.833 6.471h0.05v0.05h-0.05zM2.833 6.521h0.05v0.05h-0.05zM2.883 1.521h0.05v0.05h-0.05zM2.883 1.571h0.05v0.05h-0.05zM2.883 6.371h0.05v0.05h-0.05zM2.883 6.421h0.05v0.05h-0.05zM2.883 6.471h0.05v0.05h-0.05zM2.933 1.521h0.05v0.05h-0.05zM2.933 1.571h0.05v0.05h-0.05zM2.933 1.621h0.05v0.05h-0.05zM2.933 6.321h0.05v0.05h-0.05zM2.933 6.371h0.05v0.05h-0.05zM2.933 6.421h0.05v0.05h-0.05zM2.983 1.571h0.05v0.05h-0.05zM2.983 1.621h0.05v0.05h-0.05zM2.983 6.321h0.05v0.05h-0.05zM2.983 6.371h0.05v0.05h-0.05zM3.033 1.571h0.05v0.05h-0.05zM3.033 1.621h0.05v0.05h-0.05zM3.033 1.671h0.05v0.05h-0.05zM3.033 6.271h0.05v0.05h-0.05zM3.033 6.321h0.05v0.05h-0.05zM3.033 6.371h0.05v0.05h-0.05zM3.083 1.621h0.05v0.05h-0.05zM3.083 1.671h0.05v0.05h-0.05zM3.083 1.721h0.05v0.05h-0.05zM3.083 6.221h0.05v0.05h-0.05zM3.083 6.271h0.05v0.05h-0.05zM3.083 6.321h0.05v0.05h-0.05zM3.133 1.671h0.05v0.05h-0.05zM3.133 1.721h0.05v0.05h-0.05zM3.133 6.221h0.05v0.05h-0.05zM3.133 6.271h0.05v0.05h-0.05zM3.183 1.671h0.05v0.05h-0.05zM3.183 1.721h0.05v0.05h-0.05zM3.183 1.771h0.05v0.05h-0.05zM3.183 6.171h0.05v0.05h-0.05zM3.183 6.221h0.05v0.05h-0.05zM3.233 1.721h0.05v0.05h-0.05zM3.233 1.771h0.05v0.05h-0.05zM3.233 6.121h0.05v0.05h-0.05zM3.233 6.171h0.05v0.05h-0.05zM3.233 6.221h0.05v0.05h-0.05zM3.283 1.721h0.05v0.05h-0.05zM3.283 1.771h0.05v0.05h-0.05zM3.283 1.821h0.05v0.05h-0.05zM3.283 6.071h0.05v0.05h-0.05zM3.283 6.121h0.05v0.05h-0.05zM3.283 6.171h0.05v0.05h-0.05zM3.333 1.771h0.05v0.05h-0.05zM3.333 1.821h0.05v0.05h-0.05zM3.333 1.871h0.05v0.05h-0.05zM3.333 6.071h0.05v0.05h-0.05zM3.333 6.121h0.05v0.05h-0.05zM3.383 1.821h0.05v0.05h-0.05zM3.383 1.871h0.05v0.05h-0.05zM3.383 6.021h0.05v0.05h-0.05zM3.383 6.071h0.05v0.05h-0.05zM3.433 1.821h0.05v0.05h-0.05zM3.433 1.871h0.05v0.05h-0.05zM3.433 1.921h0.05v0.05h-0.05zM3.433 5.971h0.05v0.05h-0.05zM3.433 6.021h0.05v0.05h-0.05zM3.433 6.071h0.05v0.05h-0.05zM3.483 1.871h0.05v0.05h-0.05zM3.483 1.921h0.05v0.05h-0.05zM3.483 5.921h0.05v0.05h-0.05zM3.483 5.971h0.05v0.05h-0.05zM3.483 6.021h0.05v0.05h-0.05zM3.533 1.871h0.05v0.05h-0.05zM3.533 1.921h0.05v0.05h-0.05zM3.533 1.971h0.05v0.05h-0.05zM3.533 5.921h0.05v0.05h-0.05zM3.533 5.971h0.05v0.05h-0.05zM3.583 1.921h0.05v0.05h-0.05zM3.583 1.971h0.05v0.05h-0.05zM3.583 2.021h0.05v0.05h-0.05zM3.583 5.871h0.05v0.05h-0.05zM3.583 5.921h0.05v0.05h-0.05zM3.583 5.971h0.05v0.05h-0.05zM3.633 1.971h0.05v0.05h-0.05zM3.633 2.021h0.05v0.05h-0.05zM3.633 5.821h0.05v0.05h-0.05zM3.633 5.871h0.05v0.05h-0.05zM3.633 5.921h0.05v0.05h-0.05zM3.683 1.971h0.05v0.05h-0.05zM3.683 2.021h0.05v0.05h-0.05zM3.683 2.071h0.05v0.05h-0.05zM3.683 5.771h0.05v0.05h-0.05zM3.683 5.821h0.05v0.05h-0.05zM3.683 5.871h0.05v0.05h-0.05zM3.733 2.021h0.05v0.05h-0.05zM3.733 2.071h0.05v0.05h-0.05zM3.733 5.771h0.05v0.05h-0.05zM3.733 5.821h0.05v0.05h-0.05zM3.783 2.021h0.05v0.05h-0.05zM3.783 2.071h0.05v0.05h-0.05zM3.783 2.121h0.05v0.05h-0.05zM3.783 5.721h0.05v0.05h-0.05zM3.783 5.771h0.05v0.05h-0.05zM3.783 5.821h0.05v0.05h-0.05zM3.833 2.071h0.05v0.05h-0.05zM3.833 2.121h0.05v0.05h-0.05zM3.833 2.171h0.05v0.05h-0.05zM3.833 5.671h0.05v0.05h-0.05zM3.833 5.721h0.05v0.05h-0.05zM3.833 5.771h0.05v0.05h-0.05zM3.883 2.121h0.05v0.05h-0.05zM3.883 2.171h0.05v0.05h-0.05zM3.883 5.621h0.05v0.05h-0.05zM3.883 5.671h0.05v0.05h-0.05zM3.883 5.721h0.05v0.05h-0.05zM3.933 2.121h0.05v0.05h-0.05zM3.933 2.171h0.05v0.05h-0.05zM3.933 2.221h0.05v0.05h-0.05zM3.933 5.621h0.05v0.05h-0.05zM3.933 5.671h0.05v0.05h-0.05zM3.983 2.171h0.05v0.05h-0.05zM3.983 2.221h0.05v0.05h-0.05zM3.983 5.571h0.05v0.05h-0.05zM3.983 5.621h0.05v0.05h-0.05zM3.983 5.671h0.05v0.05h-0.05zM4.033 2.171h0.05v0.05h-0.05zM4.033 2.221h0.05v0.05h-0.05zM4.033 2.271h0.05v0.05h-0.05zM4.033 5.521h0.05v0.05h-0.05zM4.033 5.571h0.05v0.05h-0.05zM4.033 5.621h0.05v0.05h-0.05zM4.083 2.221h0.05v0.05h-0.05zM4.083 2.271h0.05v0.05h-0.05zM4.083 2.321h0.05v0.05h-0.05zM4.083 5.471h0.05v0.05h-0.05zM4.083 5.521h0.05v0.05h-0.05zM4.083 5.571h0.05v0.05h-0.05zM4.133 2.271h0.05v0.05h-0.05zM4.133 2.321h0.05v0.05h-0.05zM4.133 5.471h0.05v0.05h-0.05zM4.133 5.521h0.05v0.05h-0.05zM4.183 2.271h0.05v0.05h-0.05zM4.183 2.321h0.05v0.05h-0.05zM4.183 2.371h0.05v0.05h-0.05zM4.183 5.421h0.05v0.05h-0.05zM4.183 5.471h0.05v0.05h-0.05zM4.183 5.521h0.05v0.05h-0.05zM4.233 2.321h0.05v0.05h-0.05zM4.233 2.371h0.05v0.05h-0.05zM4.233 5.371h0.05v0.05h-0.05zM4.233 5.421h0.05v0.05h-0.05zM4.233 5.471h0.05v0.05h-0.05zM4.283 2.321h0.05v0.05h-0.05zM4.283 2.371h0.05v0.05h-0.05zM4.283 2.421h0.05v0.05h-0.05zM4.283 5.321h0.05v0.05h-0.05zM4.283 5.371h0.05v0.05h-0.05zM4.283 5.421h0.05v0.05h-0.05zM4.333 2.371h0.05v0.05h-0.05zM4.333 2.421h0.05v0.05h-0.05zM4.333 2.471h0.05v0.05h-0.05zM4.333 5.321h0.05v0.05h-0.05zM4.333 5.371h0.05v0.05h-0.05zM4.383 2.421h0.05v0.05h-0.05zM4.383 2.471h0.05v0.05h-0.05zM4.383 5.271h0.05v0.05h-0.05zM4.383 5.321h0.05v0.05h-0.05zM4.383 5.371h0.05v0.05h-0.05zM4.433 2.421h0.05v0.05h-0.05zM4.433 2.471h0.05v0.05h-0.05zM4.433 2.521h0.05v0.05h-0.05zM4.433 5.221h0.05v0.05h-0.05zM4.433 5.271h0.05v0.05h-0.05zM4.433 5.321h0.05v0.05h-0.05zM4.483 2.471h0.05v0.05h-0.05zM4.483 2.521h0.05v0.05h-0.05zM4.483 5.171h0.05v0.05h-0.05zM4.483 5.221h0.05v0.05h-0.05zM4.483 5.271h0.05v0.05h-0.05zM4.533 2.471h0.05v0.05h-0.05zM4.533 2.521h0.05v0.05h-0.05zM4.533 2.571h0.05v0.05h-0.05zM4.533 2.621h0.05v0.05h-0.05zM4.533 2.671h0.05v0.05h-0.05zM4.533 2.721h0.05v0.05h-0.05zM4.533 2.771h0.05v0.05h-0.05zM4.533 2.821h0.05v0.05h-0.05zM4.533 2.871h0.05v0.05h-0.05zM4.533 2.921h0.05v0.05h-0.05zM4.533 2.971h0.05v0.05h-0.05zM4.533 3.021h0.05v0.05h-0.05zM4.533 3.071h0.05v0.05h-0.05zM4.533 3.121h0.05v0.05h-0.05zM4.533 3.171h0.05v0.05h-0.05zM4.533 3.221h0.05v0.05h-0.05zM4.533 3.271h0.05v0.05h-0.05zM4.533 3.321h0.05v0.05h-0.05zM4.533 3.371h0.05v0.05h-0.05zM4.533 3.421h0.05v0.05h-0.05zM4.533 3.471h0.05v0.05h-0.05zM4.533 3.521h0.05v0.05h-0.05zM4.533 3.571h0.05v0.05h-0.05zM4.533 3.621h0.05v0.05h-0.05zM4.533 3.671h0.05v0.05h-0.05zM4.533 3.721h0.05v0.05h-0.05zM4.533 3.771h0.05v0.05h-0.05zM4.533 3.821h0.05v0.05h-0.05zM4.533 3.871h0.05v0.05h-0.05zM4.533 3.921h0.05v0.05h-0.05zM4.533 3.971h0.05v0.05h-0.05zM4.533 4.021h0.05v0.05h-0.05zM4.533 4.071h0.05v0.05h-0.05zM4.533 4.121h0.05v0.05h-0.05zM4.533 4.171h0.05v0.05h-0.05zM4.533 4.221h0.05v0.05h-0.05zM4.533 4.271h0.05v0.05h-0.05zM4.533 4.321h0.05v0.05h-0.05zM4.533 4.371h0.05v0.05h-0.05zM4.533 4.421h0.05v0.05h-0.05zM4.533 4.471h0.05v0.05h-0.05zM4.533 4.521h0.05v0.05h-0.05zM4.533 4.571h0.05v0.05h-0.05zM4.533 4.621h0.05v0.05h-0.05zM4.533 4.671h0.05v0.05h-0.05zM4.533 4.721h0.05v0.05h-0.05zM4.533 4.771h0.05v0.05h-0.05zM4.533 4.821h0.05v0.05h-0.05zM4.533 4.871h0.05v0.05h-0.05zM4.533 4.921h0.05v0.05h-0.05zM4.533 4.971h0.05v0.05h-0.05zM4.533 5.021h0.05v0.05h-0.05zM4.533 5.071h0.05v0.05h-0.05zM4.533 5.121h0.05v0.05h-0.05zM4.533 5.171h0.05v0.05h-0.05zM4.533 5.221h0.05v0.05h-0.05zM4.583 2.571h0.05v0.05h-0.05zM4.583 2.621h0.05v0.05h-0.05zM4.583 2.671h0.05v0.05h-0.05zM4.583 2.721h0.05v0.05h-0.05zM4.583 2.771h0.05v0.05h-0.05zM4.583 2.821h0.05v0.05h-0.05zM4.583 2.871h0.05v0.05h-0.05zM4.583 2.921h0.05v0.05h-0.05zM4.583 2.971h0.05v0.05h-0.05zM4.583 3.021h0.05v0.05h-0.05zM4.583 3.071h0.05v0.05h-0.05zM4.583 3.121h0.05v0.05h-0.05zM4.583 3.171h0.05v0.05h-0.05zM4.583 3.221h0.05v0.05h-0.05zM4.583 3.271h0.05v0.05h-0.05zM4.583 3.321h0.05v0.05h-0.05zM4.583 3.371h0.05v0.05h-0.05zM4.583 3.421h0.05v0.05h-0.05zM4.583 3.471h0.05v0.05h-0.05zM4.583 3.521h0.05v0.05h-0.05zM4.583 3.571h0.05v0.05h-0.05zM4.583 3.621h0.05v0.05h-0.05zM4.583 3.671h0.05v0.05h-0.05zM4.583 3.721h0.05v0.05h-0.05zM4.583 3.771h0.05v0.05h-0.05zM4.583 3.821h0.05v0.05h-0.05zM4.583 3.871h0.05v0.05h-0.05zM4.583 3.921h0.05v0.05h-0.05zM4.583 3.971h0.05v0.05h-0.05zM4.583 4.021h0.05v0.05h-0.05zM4.583 4.071h0.05v0.05h-0.05zM4.583 4.121h0.05v0.05h-0.05zM4.583 4.171h0.05v0.05h-0.05zM4.583 4.221h0.05v0.05h-0.05zM4.583 4.271h0.05v0.05h-0.05zM4.583 4.321h0.05v0.05h-0.05zM4.583 4.371h0.05v0.05h-0.05zM4.583 4.421h0.05v0.05h-0.05zM4.583 4.471h0.05v0.05h-0.05zM4.583 4.521h0.05v0.05h-0.05zM4.583 4.571h0.05v0.05h-0.05zM4.583 4.621h0.05v0.05h-0.05zM4.583 4.671h0.05v0.05h-0.05zM4.583 4.721h0.05v0.05h-0.05zM4.583 4.771h0.05v0.05h-0.05zM4.583 4.821h0.05v0.05h-0.05zM4.583 4.871h0.05v0.05h-0.05zM4.583 4.921h0.05v0.05h-0.05zM4.583 4.971h0.05v0.05h-0.05zM4.583 5.021h0.05v0.05h-0.05zM4.583 5.071h0.05v0.05h-0.05zM4.583 5.121h0.05v0.05h-0.05zM4.583 5.171h0.05v0.05h-0.05zM4.583 5.221h0.05v0.05h-0.05z" fill="#000"/>
<path d="M192.4,41.8L311.9,996.8M287.9,29.8L407.4,984.8M383.4,17.9L502.9,972.9M478.9,5.9L598.4,960.9M574.4,-6.0L693.9,949.0M669.9,-18.0L789.4,937.0M765.4,-29.9L884.9,925.0M860.9,-41.9L980.4,913.1M956.4,-53.8L1076.0,901.1M1052.0,-65.8L1171.5,889.2M1147.5,-77.7L1267.0,877.2M192.4,41.8L1147.5,-77.7M204.4,137.2L1159.4,17.8M216.3,232.8L1171.4,113.3M228.3,328.2L1183.3,208.8M240.2,423.8L1195.2,304.2M252.2,519.2L1207.2,399.8M264.1,614.8L1219.2,495.2M276.1,710.2L1231.1,590.8M288.0,805.8L1243.1,686.2M300.0,901.2L1255.0,781.8M311.9,996.8L1267.0,877.2" stroke="#a0a0a4" stroke-opacity="0.5" stroke-width="1" fill="none"/>
<path d="M814.0,403.5L905.0,395.0" stroke="#000" stroke-width="5" fill="none" />
<path d="M519.6,303.8L559.7,271.3L610.8,233.1L656.3,197.7L691.0,168.0L700.0,180.0L662.3,205.7L615.6,239.5L563.3,276.1L520.2,304.6Z" fill="#e60000" />
<path d="M691.0,168.0L770.6,205.2L877.4,253.3L951.5,284.9L965.4,314.0L996.1,555.9L773.6,756.7L761.6,743.3L981.6,544.8L966.6,426.6L951.3,297.9L872.2,265.2L764.5,219.0L685.0,181.7Z" fill="#e60000" />
<path d="M769.5,759.7L700.9,729.2L614.9,701.4L565.7,687.2L543.0,679.3L544.1,676.5L568.3,680.7L619.0,691.2L704.2,720.8L775.4,744.8Z" fill="#e60000" />
<path d="M492.9,629.9L487.7,585.6L471.3,467.8L454.9,350.0L463.8,348.8L479.3,466.7L494.7,584.7L496.9,629.4Z" fill="#e60000" />
<path d="M763.8 188.9h1.1v1.1h-1.1zM828.2 216.2h1.1v1.1h-1.1zM804.3 209.6h1.1v1.1h-1.1zM710.1 169.9h1.1v1.1h-1.1zM706.4 167.4h1.1v1.1h-1.1zM714.4 166.4h1.1v1.1h-1.1zM780.3 205.0h1.1v1.1h-1.1zM724.3 172.5h1.1v1.1h-1.1zM819.4 223.8h1.1v1.1h-1.1zM812.2 213.4h1.1v1.1h-1.1zM892.0 244.0h1.1v1.1h-1.1zM867.7 236.5h1.1v1.1h-1.1zM728.8 173.1h1.1v1.1h-1.1zM757.6 194.9h1.1v1.1h-1.1zM733.7 181.3h1.1v1.1h-1.1zM824.4 218.5h1.1v1.1h-1.1zM808.1 207.2h1.1v1.1h-1.1zM711.9 166.8h1.1v1.1h-1.1zM832.2 222.7h1.1v1.1h-1.1zM759.8 192.9h1.1v1.1h-1.1zM788.4 201.7h1.1v1.1h-1.1zM853.2 235.5h1.1v1.1h-1.1zM746.2 186.7h1.1v1.1h-1.1zM799.7 214.2h1.1v1.1h-1.1zM842.5 225.4h1.1v1.1h-1.1zM892.4 245.1h1.1v1.1h-1.1zM779.3 203.7h1.1v1.1h-1.1zM728.6 177.8h1.1v1.1h-1.1zM705.6 170.1h1.1v1.1h-1.1zM848.0 231.5h1.1v1.1h-1.1zM871.0 238.2h1.1v1.1h-1.1zM834.3 225.8h1.1v1.1h-1.1zM812.4 214.3h1.1v1.1h-1.1zM861.0 242.1h1.1v1.1h-1.1zM790.7 207.5h1.1v1.1h-1.1zM709.7 172.3h1.1v1.1h-1.1zM823.0 226.0h1.1v1.1h-1.1zM860.6 233.3h1.1v1.1h-1.1zM773.4 200.0h1.1v1.1h-1.1zM703.4 166.4h1.1v1.1h-1.1zM733.5 175.1h1.1v1.1h-1.1zM709.0 172.9h1.1v1.1h-1.1zM725.3 173.2h1.1v1.1h-1.1zM773.5 202.6h1.1v1.1h-1.1zM714.8 171.3h1.1v1.1h-1.1zM804.4 216.4h1.1v1.1h-1.1zM857.3 239.4h1.1v1.1h-1.1zM753.7 187.9h1.1v1.1h-1.1zM767.1 200.0h1.1v1.1h-1.1zM887.8 243.5h1.1v1.1h-1.1zM734.5 177.1h1.1v1.1h-1.1zM744.5 184.8h1.1v1.1h-1.1zM815.2 213.0h1.1v1.1h-1.1zM700.0 164.3h1.1v1.1h-1.1zM770.7 197.4h1.1v1.1h-1.1zM884.3 249.1h1.1v1.1h-1.1zM799.1 210.6h1.1v1.1h-1.1zM833.2 218.2h1.1v1.1h-1.1zM873.4 245.4h1.1v1.1h-1.1zM868.4 243.5h1.1v1.1h-1.1zM776.0 197.6h1.1v1.1h-1.1zM718.4 175.3h1.1v1.1h-1.1zM713.0 165.5h1.1v1.1h-1.1zM741.3 179.1h1.1v1.1h-1.1zM767.5 189.2h1.1v1.1h-1.1zM700.5 161.1h1.1v1.1h-1.1zM719.3 172.1h1.1v1.1h-1.1zM702.0 171.2h1.1v1.1h-1.1zM820.6 213.9h1.1v1.1h-1.1zM748.9 184.9h1.1v1.1h-1.1zM771.8 192.1h1.1v1.1h-1.1zM862.5 243.4h1.1v1.1h-1.1zM790.0 204.8h1.1v1.1h-1.1zM717.5 167.9h1.1v1.1h-1.1zM766.9 191.8h1.1v1.1h-1.1zM862.6 232.5h1.1v1.1h-1.1zM701.1 171.8h1.1v1.1h-1.1zM803.8 206.5h1.1v1.1h-1.1zM807.3 206.5h1.1v1.1h-1.1zM799.8 215.6h1.1v1.1h-1.1zM866.7 241.4h1.1v1.1h-1.1zM750.5 185.9h1.1v1.1h-1.1zM730.1 182.2h1.1v1.1h-1.1zM801.6 213.8h1.1v1.1h-1.1zM764.6 190.2h1.1v1.1h-1.1zM855.2 240.1h1.1v1.1h-1.1zM864.1 241.7h1.1v1.1h-1.1zM857.7 238.0h1.1v1.1h-1.1zM743.1 184.6h1.1v1.1h-1.1zM770.6 190.3h1.1v1.1h-1.1zM705.3 164.9h1.1v1.1h-1.1zM748.6 189.3h1.1v1.1h-1.1zM886.2 246.7h1.1v1.1h-1.1zM879.7 250.9h1.1v1.1h-1.1zM886.3 245.6h1.1v1.1h-1.1zM743.2 180.9h1.1v1.1h-1.1zM738.7 178.6h1.1v1.1h-1.1zM818.9 223.0h1.1v1.1h-1.1zM863.3 237.0h1.1v1.1h-1.1zM825.1 224.4h1.1v1.1h-1.1zM714.6 173.9h1.1v1.1h-1.1zM875.4 246.3h1.1v1.1h-1.1zM845.6 229.2h1.1v1.1h-1.1zM732.3 183.4h1.1v1.1h-1.1zM762.4 196.8h1.1v1.1h-1.1zM889.4 247.4h1.1v1.1h-1.1zM775.1 204.4h1.1v1.1h-1.1zM842.2 223.7h1.1v1.1h-1.1zM725.3 172.0h1.1v1.1h-1.1zM874.3 246.2h1.1v1.1h-1.1zM725.8 181.0h1.1v1.1h-1.1zM889.8 251.0h1.1v1.1h-1.1zM767.1 195.6h1.1v1.1h-1.1zM726.8 170.8h1.1v1.1h-1.1zM888.0 250.1h1.1v1.1h-1.1zM799.7 215.0h1.1v1.1h-1.1zM781.9 206.3h1.1v1.1h-1.1zM861.8 232.9h1.1v1.1h-1.1zM749.0 184.3h1.1v1.1h-1.1zM745.4 186.5h1.1v1.1h-1.1zM749.9 186.3h1.1v1.1h-1.1zM722.4 180.7h1.1v1.1h-1.1zM768.2 194.9h1.1v1.1h-1.1zM810.9 219.6h1.1v1.1h-1.1zM779.0 205.7h1.1v1.1h-1.1zM796.8 208.4h1.1v1.1h-1.1zM803.5 204.7h1.1v1.1h-1.1zM786.4 199.3h1.1v1.1h-1.1zM698.1 168.5h1.1v1.1h-1.1zM732.6 179.4h1.1v1.1h-1.1zM840.4 228.0h1.1v1.1h-1.1zM762.5 193.2h1.1v1.1h-1.1zM806.1 215.8h1.1v1.1h-1.1zM719.2 174.7h1.1v1.1h-1.1zM748.5 183.8h1.1v1.1h-1.1zM849.8 231.5h1.1v1.1h-1.1zM807.4 216.1h1.1v1.1h-1.1zM877.6 242.8h1.1v1.1h-1.1zM818.6 217.7h1.1v1.1h-1.1zM798.0 211.1h1.1v1.1h-1.1zM787.1 204.2h1.1v1.1h-1.1zM790.2 210.9h1.1v1.1h-1.1zM833.8 229.2h1.1v1.1h-1.1zM884.3 243.4h1.1v1.1h-1.1zM806.1 217.9h1.1v1.1h-1.1zM864.9 233.2h1.1v1.1h-1.1zM722.9 174.7h1.1v1.1h-1.1zM714.2 168.3h1.1v1.1h-1.1zM712.3 173.0h1.1v1.1h-1.1zM850.2 236.8h1.1v1.1h-1.1zM727.9 180.5h1.1v1.1h-1.1zM829.7 217.8h1.1v1.1h-1.1zM869.2 246.1h1.1v1.1h-1.1zM739.5 188.8h1.1v1.1h-1.1zM776.8 199.0h1.1v1.1h-1.1zM890.8 253.8h1.1v1.1h-1.1zM730.7 178.0h1.1v1.1h-1.1zM800.4 207.5h1.1v1.1h-1.1zM738.0 179.7h1.1v1.1h-1.1zM842.4 221.8h1.1v1.1h-1.1zM807.5 211.9h1.1v1.1h-1.1zM703.1 164.6h1.1v1.1h-1.1zM820.8 218.7h1.1v1.1h-1.1zM709.0 175.7h1.1v1.1h-1.1zM850.7 238.0h1.1v1.1h-1.1zM720.4 171.3h1.1v1.1h-1.1zM705.2 171.3h1.1v1.1h-1.1zM753.5 184.1h1.1v1.1h-1.1zM779.4 205.8h1.1v1.1h-1.1zM860.2 232.8h1.1v1.1h-1.1zM726.0 182.3h1.1v1.1h-1.1zM809.4 216.2h1.1v1.1h-1.1zM718.4 167.7h1.1v1.1h-1.1zM833.8 223.3h1.1v1.1h-1.1zM710.8 175.9h1.1v1.1h-1.1zM821.4 222.8h1.1v1.1h-1.1zM713.4 176.0h1.1v1.1h-1.1zM710.1 174.6h1.1v1.1h-1.1zM788.3 202.2h1.1v1.1h-1.1zM804.9 217.2h1.1v1.1h-1.1zM753.0 183.9h1.1v1.1h-1.1zM803.1 207.4h1.1v1.1h-1.1zM721.8 170.6h1.1v1.1h-1.1zM710.1 165.9h1.1v1.1h-1.1zM760.8 189.6h1.1v1.1h-1.1zM848.4 228.0h1.1v1.1h-1.1zM798.2 204.4h1.1v1.1h-1.1zM769.0 189.5h1.1v1.1h-1.1zM750.1 181.1h1.1v1.1h-1.1zM842.0 228.6h1.1v1.1h-1.1zM736.0 180.9h1.1v1.1h-1.1zM883.5 241.1h1.1v1.1h-1.1zM859.3 234.7h1.1v1.1h-1.1zM794.0 211.2h1.1v1.1h-1.1zM775.6 198.8h1.1v1.1h-1.1zM831.0 229.4h1.1v1.1h-1.1zM764.2 198.0h1.1v1.1h-1.1zM836.4 227.2h1.1v1.1h-1.1zM778.7 198.1h1.1v1.1h-1.1zM711.2 165.5h1.1v1.1h-1.1zM711.4 173.6h1.1v1.1h-1.1zM750.4 183.2h1.1v1.1h-1.1zM713.7 175.9h1.1v1.1h-1.1zM868.3 241.7h1.1v1.1h-1.1zM755.2 186.3h1.1v1.1h-1.1zM756.3 189.7h1.1v1.1h-1.1zM729.9 177.8h1.1v1.1h-1.1zM748.0 192.6h1.1v1.1h-1.1zM888.8 249.2h1.1v1.1h-1.1zM744.3 191.0h1.1v1.1h-1.1zM760.0 190.0h1.1v1.1h-1.1zM699.6 163.7h1.1v1.1h-1.1zM791.6 205.8h1.1v1.1h-1.1zM738.1 182.2h1.1v1.1h-1.1zM700.9 162.7h1.1v1.1h-1.1zM716.8 171.5h1.1v1.1h-1.1zM709.2 163.2h1.1v1.1h-1.1zM759.6 188.1h1.1v1.1h-1.1zM813.2 215.6h1.1v1.1h-1.1zM844.9 231.3h1.1v1.1h-1.1zM837.0 230.7h1.1v1.1h-1.1zM775.8 196.5h1.1v1.1h-1.1zM893.1 245.8h1.1v1.1h-1.1zM839.8 228.8h1.1v1.1h-1.1zM705.7 172.3h1.1v1.1h-1.1zM872.7 243.1h1.1v1.1h-1.1zM840.8 231.5h1.1v1.1h-1.1zM725.9 177.1h1.1v1.1h-1.1zM795.8 212.0h1.1v1.1h-1.1zM854.6 237.8h1.1v1.1h-1.1zM811.1 219.5h1.1v1.1h-1.1zM831.4 225.8h1.1v1.1h-1.1zM746.0 179.5h1.1v1.1h-1.1zM725.5 174.8h1.1v1.1h-1.1zM717.7 177.6h1.1v1.1h-1.1zM807.4 214.4h1.1v1.1h-1.1zM820.4 220.8h1.1v1.1h-1.1zM796.9 201.6h1.1v1.1h-1.1zM853.6 236.3h1.1v1.1h-1.1zM797.0 208.6h1.1v1.1h-1.1zM829.9 216.9h1.1v1.1h-1.1zM844.1 225.6h1.1v1.1h-1.1zM714.5 168.7h1.1v1.1h-1.1zM842.9 224.5h1.1v1.1h-1.1zM841.2 233.8h1.1v1.1h-1.1zM796.0 206.1h1.1v1.1h-1.1zM791.6 208.1h1.1v1.1h-1.1zM848.3 232.2h1.1v1.1h-1.1zM826.6 215.6h1.1v1.1h-1.1zM728.8 174.9h1.1v1.1h-1.1zM845.1 226.7h1.1v1.1h-1.1zM812.2 208.4h1.1v1.1h-1.1zM711.8 167.6h1.1v1.1h-1.1zM829.3 224.9h1.1v1.1h-1.1zM832.0 220.8h1.1v1.1h-1.1zM800.0 209.0h1.1v1.1h-1.1zM791.9 200.8h1.1v1.1h-1.1zM875.1 238.5h1.1v1.1h-1.1zM888.0 253.9h1.1v1.1h-1.1zM702.4 165.9h1.1v1.1h-1.1zM902.8 282.9h1.1v1.1h-1.1zM805.2 235.3h1.1v1.1h-1.1zM739.3 210.8h1.1v1.1h-1.1zM740.4 208.9h1.1v1.1h-1.1zM722.1 200.4h1.1v1.1h-1.1zM940.4 294.0h1.1v1.1h-1.1zM903.9 280.4h1.1v1.1h-1.1zM921.3 289.3h1.1v1.1h-1.1zM745.2 213.0h1.1v1.1h-1.1zM815.6 238.3h1.1v1.1h-1.1zM685.1 183.9h1.1v1.1h-1.1zM805.4 235.7h1.1v1.1h-1.1zM722.2 199.3h1.1v1.1h-1.1zM768.0 222.7h1.1v1.1h-1.1zM684.0 185.1h1.1v1.1h-1.1zM909.9 280.5h1.1v1.1h-1.1zM931.9 294.0h1.1v1.1h-1.1zM926.3 288.8h1.1v1.1h-1.1zM784.2 226.9h1.1v1.1h-1.1zM951.6 301.9h1.1v1.1h-1.1zM781.0 225.7h1.1v1.1h-1.1zM759.0 213.5h1.1v1.1h-1.1zM710.6 197.4h1.1v1.1h-1.1zM759.6 219.7h1.1v1.1h-1.1zM751.5 211.7h1.1v1.1h-1.1zM821.8 242.1h1.1v1.1h-1.1zM783.1 230.1h1.1v1.1h-1.1zM920.4 289.6h1.1v1.1h-1.1zM852.2 260.3h1.1v1.1h-1.1zM936.1 294.8h1.1v1.1h-1.1zM878.1 266.0h1.1v1.1h-1.1zM880.5 269.7h1.1v1.1h-1.1zM885.5 273.2h1.1v1.1h-1.1zM761.9 214.9h1.1v1.1h-1.1zM933.4 290.9h1.1v1.1h-1.1zM811.1 238.4h1.1v1.1h-1.1zM763.4 220.0h1.1v1.1h-1.1zM946.4 297.4h1.1v1.1h-1.1zM860.4 259.9h1.1v1.1h-1.1zM833.8 248.7h1.1v1.1h-1.1zM729.8 201.4h1.1v1.1h-1.1zM738.9 210.3h1.1v1.1h-1.1zM818.0 240.7h1.1v1.1h-1.1zM925.8 293.2h1.1v1.1h-1.1zM805.6 234.7h1.1v1.1h-1.1zM736.7 204.0h1.1v1.1h-1.1zM776.8 221.7h1.1v1.1h-1.1zM748.8 210.4h1.1v1.1h-1.1zM835.9 252.9h1.1v1.1h-1.1zM885.3 271.5h1.1v1.1h-1.1zM795.0 232.5h1.1v1.1h-1.1zM785.5 227.1h1.1v1.1h-1.1zM701.3 189.7h1.1v1.1h-1.1zM944.4 295.7h1.1v1.1h-1.1zM818.7 243.7h1.1v1.1h-1.1zM916.1 283.8h1.1v1.1h-1.1zM757.4 214.2h1.1v1.1h-1.1zM791.4 230.4h1.1v1.1h-1.1zM939.0 298.0h1.1v1.1h-1.1zM919.2 283.9h1.1v1.1h-1.1zM692.3 188.5h1.1v1.1h-1.1zM924.3 289.1h1.1v1.1h-1.1zM842.7 250.1h1.1v1.1h-1.1zM788.0 232.1h1.1v1.1h-1.1zM904.5 282.9h1.1v1.1h-1.1zM945.3 296.9h1.1v1.1h-1.1zM714.2 194.5h1.1v1.1h-1.1zM823.7 246.2h1.1v1.1h-1.1zM935.9 295.9h1.1v1.1h-1.1zM857.0 261.4h1.1v1.1h-1.1zM806.6 237.8h1.1v1.1h-1.1zM694.1 189.8h1.1v1.1h-1.1zM745.5 213.3h1.1v1.1h-1.1zM857.6 258.7h1.1v1.1h-1.1zM719.0 197.3h1.1v1.1h-1.1zM854.2 259.7h1.1v1.1h-1.1zM715.2 194.4h1.1v1.1h-1.1zM824.5 245.9h1.1v1.1h-1.1zM788.8 227.8h1.1v1.1h-1.1zM846.4 251.8h1.1v1.1h-1.1zM765.1 218.9h1.1v1.1h-1.1zM940.8 297.5h1.1v1.1h-1.1zM921.1 287.7h1.1v1.1h-1.1zM747.7 209.9h1.1v1.1h-1.1zM941.1 298.0h1.1v1.1h-1.1zM767.7 217.2h1.1v1.1h-1.1zM817.3 243.3h1.1v1.1h-1.1zM797.3 231.8h1.1v1.1h-1.1zM862.0 264.6h1.1v1.1h-1.1zM746.1 207.8h1.1v1.1h-1.1zM774.9 223.0h1.1v1.1h-1.1zM867.8 262.4h1.1v1.1h-1.1zM897.2 278.9h1.1v1.1h-1.1zM820.2 241.5h1.1v1.1h-1.1zM944.5 297.0h1.1v1.1h-1.1zM904.6 278.8h1.1v1.1h-1.1zM742.9 211.1h1.1v1.1h-1.1zM762.1 220.8h1.1v1.1h-1.1zM817.8 240.3h1.1v1.1h-1.1zM744.2 209.5h1.1v1.1h-1.1zM861.4 264.5h1.1v1.1h-1.1zM723.6 200.2h1.1v1.1h-1.1zM740.1 211.3h1.1v1.1h-1.1zM723.3 197.8h1.1v1.1h-1.1zM700.5 190.1h1.1v1.1h-1.1zM923.9 291.6h1.1v1.1h-1.1zM879.3 272.8h1.1v1.1h-1.1zM934.2 292.5h1.1v1.1h-1.1zM732.8 207.8h1.1v1.1h-1.1zM885.3 269.1h1.1v1.1h-1.1zM862.5 261.3h1.1v1.1h-1.1zM784.8 226.8h1.1v1.1h-1.1zM730.7 200.8h1.1v1.1h-1.1zM759.5 215.8h1.1v1.1h-1.1zM941.1 294.2h1.1v1.1h-1.1zM943.3 295.7h1.1v1.1h-1.1zM778.9 227.4h1.1v1.1h-1.1zM904.6 280.2h1.1v1.1h-1.1zM697.4 189.2h1.1v1.1h-1.1zM783.0 229.8h1.1v1.1h-1.1zM967.9 466.4h1.1v1.1h-1.1zM981.4 538.0h1.1v1.1h-1.1zM965.0 489.5h1.1v1.1h-1.1zM979.5 524.7h1.1v1.1h-1.1zM969.7 449.7h1.1v1.1h-1.1zM978.7 540.7h1.1v1.1h-1.1zM968.2 524.1h1.1v1.1h-1.1zM971.0 481.2h1.1v1.1h-1.1zM974.6 545.2h1.1v1.1h-1.1zM964.2 474.1h1.1v1.1h-1.1zM970.6 478.9h1.1v1.1h-1.1zM960.4 447.7h1.1v1.1h-1.1zM973.8 541.0h1.1v1.1h-1.1zM982.0 542.7h1.1v1.1h-1.1zM967.0 470.8h1.1v1.1h-1.1zM970.2 545.6h1.1v1.1h-1.1zM971.9 486.1h1.1v1.1h-1.1zM969.3 490.9h1.1v1.1h-1.1zM979.8 541.4h1.1v1.1h-1.1zM971.0 529.5h1.1v1.1h-1.1zM970.8 531.6h1.1v1.1h-1.1zM973.8 508.8h1.1v1.1h-1.1zM969.6 479.4h1.1v1.1h-1.1zM979.2 526.3h1.1v1.1h-1.1zM962.9 467.5h1.1v1.1h-1.1zM972.5 471.5h1.1v1.1h-1.1zM963.4 450.4h1.1v1.1h-1.1zM961.7 481.0h1.1v1.1h-1.1zM968.8 538.2h1.1v1.1h-1.1zM972.4 473.3h1.1v1.1h-1.1zM964.9 456.7h1.1v1.1h-1.1zM973.6 519.5h1.1v1.1h-1.1zM967.7 470.7h1.1v1.1h-1.1zM969.5 510.7h1.1v1.1h-1.1zM968.9 524.1h1.1v1.1h-1.1zM977.2 514.3h1.1v1.1h-1.1zM977.2 532.7h1.1v1.1h-1.1zM972.6 504.7h1.1v1.1h-1.1zM977.1 522.0h1.1v1.1h-1.1zM970.1 471.8h1.1v1.1h-1.1zM960.7 463.2h1.1v1.1h-1.1zM973.4 505.8h1.1v1.1h-1.1zM962.4 488.2h1.1v1.1h-1.1zM973.7 498.4h1.1v1.1h-1.1zM972.2 530.0h1.1v1.1h-1.1zM981.7 547.8h1.1v1.1h-1.1zM965.7 496.0h1.1v1.1h-1.1zM969.2 533.7h1.1v1.1h-1.1zM966.8 450.6h1.1v1.1h-1.1zM969.2 458.6h1.1v1.1h-1.1zM975.2 546.7h1.1v1.1h-1.1zM977.4 542.0h1.1v1.1h-1.1zM975.6 535.5h1.1v1.1h-1.1zM963.4 473.9h1.1v1.1h-1.1zM981.0 543.1h1.1v1.1h-1.1zM969.8 508.1h1.1v1.1h-1.1zM968.2 468.9h1.1v1.1h-1.1zM969.3 460.9h1.1v1.1h-1.1zM965.7 473.1h1.1v1.1h-1.1zM975.9 513.1h1.1v1.1h-1.1zM966.0 447.7h1.1v1.1h-1.1zM976.5 515.8h1.1v1.1h-1.1zM971.5 478.4h1.1v1.1h-1.1zM973.4 528.4h1.1v1.1h-1.1zM969.6 452.7h1.1v1.1h-1.1zM968.1 487.4h1.1v1.1h-1.1zM977.2 511.7h1.1v1.1h-1.1zM963.2 463.9h1.1v1.1h-1.1zM971.8 488.5h1.1v1.1h-1.1zM961.8 479.1h1.1v1.1h-1.1zM966.8 479.0h1.1v1.1h-1.1zM969.4 483.3h1.1v1.1h-1.1zM968.5 536.2h1.1v1.1h-1.1zM972.3 483.6h1.1v1.1h-1.1zM976.9 521.0h1.1v1.1h-1.1zM958.5 448.1h1.1v1.1h-1.1zM965.0 490.8h1.1v1.1h-1.1zM964.0 489.1h1.1v1.1h-1.1zM974.0 493.5h1.1v1.1h-1.1zM963.2 448.5h1.1v1.1h-1.1zM966.7 513.2h1.1v1.1h-1.1zM963.2 456.2h1.1v1.1h-1.1zM968.4 484.9h1.1v1.1h-1.1zM968.3 461.4h1.1v1.1h-1.1zM964.9 501.0h1.1v1.1h-1.1zM965.2 458.0h1.1v1.1h-1.1zM968.1 530.1h1.1v1.1h-1.1zM971.0 466.5h1.1v1.1h-1.1zM969.8 544.3h1.1v1.1h-1.1zM975.7 495.6h1.1v1.1h-1.1zM977.1 541.6h1.1v1.1h-1.1zM973.8 539.7h1.1v1.1h-1.1zM978.7 530.8h1.1v1.1h-1.1zM977.4 526.9h1.1v1.1h-1.1zM964.4 488.9h1.1v1.1h-1.1zM978.5 531.3h1.1v1.1h-1.1zM967.8 469.0h1.1v1.1h-1.1zM971.9 499.7h1.1v1.1h-1.1zM968.5 459.0h1.1v1.1h-1.1zM967.9 521.8h1.1v1.1h-1.1zM963.4 451.2h1.1v1.1h-1.1zM979.4 523.7h1.1v1.1h-1.1zM979.5 532.1h1.1v1.1h-1.1zM970.8 508.4h1.1v1.1h-1.1zM974.3 510.8h1.1v1.1h-1.1zM968.0 490.0h1.1v1.1h-1.1zM967.1 490.7h1.1v1.1h-1.1zM970.2 492.5h1.1v1.1h-1.1zM962.4 449.4h1.1v1.1h-1.1zM973.4 496.6h1.1v1.1h-1.1zM970.0 525.6h1.1v1.1h-1.1zM973.7 493.3h1.1v1.1h-1.1zM974.9 494.7h1.1v1.1h-1.1zM966.2 459.9h1.1v1.1h-1.1zM965.6 456.2h1.1v1.1h-1.1zM976.2 498.4h1.1v1.1h-1.1zM977.3 511.4h1.1v1.1h-1.1zM969.6 522.5h1.1v1.1h-1.1zM976.0 498.5h1.1v1.1h-1.1zM971.8 498.3h1.1v1.1h-1.1zM980.7 543.7h1.1v1.1h-1.1zM968.4 535.5h1.1v1.1h-1.1zM969.1 522.4h1.1v1.1h-1.1zM959.9 467.5h1.1v1.1h-1.1zM964.1 498.0h1.1v1.1h-1.1zM979.9 540.2h1.1v1.1h-1.1zM968.3 528.4h1.1v1.1h-1.1zM966.4 453.3h1.1v1.1h-1.1zM977.9 523.8h1.1v1.1h-1.1zM978.2 538.4h1.1v1.1h-1.1zM978.8 529.9h1.1v1.1h-1.1zM964.8 499.0h1.1v1.1h-1.1zM969.4 467.8h1.1v1.1h-1.1zM972.5 498.4h1.1v1.1h-1.1zM968.2 450.1h1.1v1.1h-1.1zM960.1 464.1h1.1v1.1h-1.1zM967.4 517.2h1.1v1.1h-1.1zM962.2 464.6h1.1v1.1h-1.1zM964.7 458.7h1.1v1.1h-1.1zM973.7 511.8h1.1v1.1h-1.1zM974.3 536.4h1.1v1.1h-1.1zM966.2 506.9h1.1v1.1h-1.1zM958.6 458.4h1.1v1.1h-1.1zM973.2 511.2h1.1v1.1h-1.1zM977.0 528.2h1.1v1.1h-1.1zM975.5 548.5h1.1v1.1h-1.1zM964.9 484.2h1.1v1.1h-1.1zM973.6 491.6h1.1v1.1h-1.1zM979.1 522.3h1.1v1.1h-1.1zM977.5 530.5h1.1v1.1h-1.1zM965.7 513.2h1.1v1.1h-1.1zM969.1 507.2h1.1v1.1h-1.1zM974.1 478.1h1.1v1.1h-1.1zM968.6 449.7h1.1v1.1h-1.1zM972.5 509.9h1.1v1.1h-1.1zM965.2 500.0h1.1v1.1h-1.1zM968.9 459.9h1.1v1.1h-1.1zM978.3 513.0h1.1v1.1h-1.1zM965.5 446.9h1.1v1.1h-1.1zM966.9 457.5h1.1v1.1h-1.1zM965.5 470.0h1.1v1.1h-1.1zM975.1 506.7h1.1v1.1h-1.1zM972.1 510.8h1.1v1.1h-1.1zM959.8 461.4h1.1v1.1h-1.1zM971.3 471.2h1.1v1.1h-1.1zM963.1 456.9h1.1v1.1h-1.1zM971.3 536.6h1.1v1.1h-1.1zM971.9 487.7h1.1v1.1h-1.1zM961.9 448.3h1.1v1.1h-1.1zM972.9 504.2h1.1v1.1h-1.1zM972.8 512.9h1.1v1.1h-1.1zM972.8 543.3h1.1v1.1h-1.1zM961.7 473.0h1.1v1.1h-1.1zM963.8 451.4h1.1v1.1h-1.1zM972.3 488.0h1.1v1.1h-1.1zM960.8 453.3h1.1v1.1h-1.1zM963.1 448.2h1.1v1.1h-1.1zM980.5 542.7h1.1v1.1h-1.1zM964.8 467.5h1.1v1.1h-1.1zM968.4 499.0h1.1v1.1h-1.1zM978.4 529.7h1.1v1.1h-1.1zM970.2 478.2h1.1v1.1h-1.1zM959.2 452.5h1.1v1.1h-1.1zM971.0 527.4h1.1v1.1h-1.1zM959.3 448.1h1.1v1.1h-1.1zM973.8 523.2h1.1v1.1h-1.1zM973.9 522.8h1.1v1.1h-1.1zM971.7 469.4h1.1v1.1h-1.1zM972.6 469.9h1.1v1.1h-1.1zM964.8 481.6h1.1v1.1h-1.1zM968.2 518.7h1.1v1.1h-1.1zM975.9 519.4h1.1v1.1h-1.1zM971.7 503.5h1.1v1.1h-1.1zM973.6 527.7h1.1v1.1h-1.1zM965.3 474.3h1.1v1.1h-1.1zM979.8 545.3h1.1v1.1h-1.1zM981.3 536.2h1.1v1.1h-1.1zM970.4 473.1h1.1v1.1h-1.1zM967.6 523.8h1.1v1.1h-1.1zM975.6 523.0h1.1v1.1h-1.1zM977.3 536.8h1.1v1.1h-1.1zM961.5 472.0h1.1v1.1h-1.1zM969.4 511.8h1.1v1.1h-1.1zM966.1 515.8h1.1v1.1h-1.1zM965.4 495.5h1.1v1.1h-1.1zM968.1 518.9h1.1v1.1h-1.1zM966.4 492.0h1.1v1.1h-1.1zM973.5 505.0h1.1v1.1h-1.1zM964.8 468.8h1.1v1.1h-1.1zM959.3 455.5h1.1v1.1h-1.1zM971.6 460.9h1.1v1.1h-1.1zM959.5 458.5h1.1v1.1h-1.1zM972.7 481.6h1.1v1.1h-1.1zM969.9 449.0h1.1v1.1h-1.1zM970.9 518.1h1.1v1.1h-1.1zM969.6 518.7h1.1v1.1h-1.1zM963.3 453.7h1.1v1.1h-1.1zM964.3 484.6h1.1v1.1h-1.1zM969.3 531.5h1.1v1.1h-1.1zM959.7 454.2h1.1v1.1h-1.1zM969.8 541.3h1.1v1.1h-1.1zM968.8 457.3h1.1v1.1h-1.1zM971.1 457.6h1.1v1.1h-1.1zM970.6 534.2h1.1v1.1h-1.1zM967.7 512.4h1.1v1.1h-1.1zM974.6 511.2h1.1v1.1h-1.1zM970.1 456.4h1.1v1.1h-1.1zM977.3 524.0h1.1v1.1h-1.1zM968.8 479.4h1.1v1.1h-1.1zM967.0 448.6h1.1v1.1h-1.1zM964.5 476.2h1.1v1.1h-1.1zM970.7 484.3h1.1v1.1h-1.1zM976.1 545.6h1.1v1.1h-1.1zM973.2 534.3h1.1v1.1h-1.1zM965.2 449.9h1.1v1.1h-1.1zM965.8 492.0h1.1v1.1h-1.1zM965.5 482.7h1.1v1.1h-1.1zM974.3 501.5h1.1v1.1h-1.1zM980.1 534.5h1.1v1.1h-1.1zM978.6 530.3h1.1v1.1h-1.1zM967.5 446.5h1.1v1.1h-1.1zM967.4 525.7h1.1v1.1h-1.1zM963.8 447.3h1.1v1.1h-1.1zM966.2 497.7h1.1v1.1h-1.1zM966.1 465.8h1.1v1.1h-1.1zM963.9 483.0h1.1v1.1h-1.1zM961.3 474.3h1.1v1.1h-1.1zM971.0 475.5h1.1v1.1h-1.1zM972.8 518.5h1.1v1.1h-1.1zM963.3 458.3h1.1v1.1h-1.1zM961.0 455.6h1.1v1.1h-1.1zM969.0 518.8h1.1v1.1h-1.1zM973.7 511.0h1.1v1.1h-1.1zM970.2 487.8h1.1v1.1h-1.1zM980.6 537.4h1.1v1.1h-1.1zM981.3 537.1h1.1v1.1h-1.1zM969.4 467.6h1.1v1.1h-1.1zM975.3 539.2h1.1v1.1h-1.1zM963.6 486.4h1.1v1.1h-1.1zM967.2 470.7h1.1v1.1h-1.1zM967.3 501.7h1.1v1.1h-1.1zM971.5 524.3h1.1v1.1h-1.1zM970.4 482.3h1.1v1.1h-1.1zM961.2 463.3h1.1v1.1h-1.1zM969.1 515.1h1.1v1.1h-1.1zM966.6 464.1h1.1v1.1h-1.1zM972.7 526.2h1.1v1.1h-1.1zM965.8 459.7h1.1v1.1h-1.1zM978.5 537.1h1.1v1.1h-1.1zM968.7 466.2h1.1v1.1h-1.1zM968.4 519.5h1.1v1.1h-1.1zM970.1 462.1h1.1v1.1h-1.1zM969.1 471.9h1.1v1.1h-1.1zM974.8 499.8h1.1v1.1h-1.1zM971.9 480.0h1.1v1.1h-1.1zM973.4 547.2h1.1v1.1h-1.1zM959.0 458.0h1.1v1.1h-1.1zM966.4 457.1h1.1v1.1h-1.1zM972.6 548.2h1.1v1.1h-1.1zM974.0 521.9h1.1v1.1h-1.1zM964.4 467.2h1.1v1.1h-1.1zM968.8 457.3h1.1v1.1h-1.1zM974.7 485.9h1.1v1.1h-1.1zM965.1 488.2h1.1v1.1h-1.1zM972.6 517.9h1.1v1.1h-1.1zM972.3 511.6h1.1v1.1h-1.1zM964.1 461.6h1.1v1.1h-1.1zM965.8 488.7h1.1v1.1h-1.1zM976.4 539.8h1.1v1.1h-1.1zM967.9 506.1h1.1v1.1h-1.1zM972.6 489.6h1.1v1.1h-1.1zM968.1 521.5h1.1v1.1h-1.1zM971.1 526.5h1.1v1.1h-1.1zM972.4 534.5h1.1v1.1h-1.1zM972.6 512.5h1.1v1.1h-1.1zM966.0 479.1h1.1v1.1h-1.1zM965.9 456.7h1.1v1.1h-1.1zM971.1 527.4h1.1v1.1h-1.1zM975.0 511.0h1.1v1.1h-1.1zM969.7 490.2h1.1v1.1h-1.1zM972.9 510.4h1.1v1.1h-1.1zM966.9 516.8h1.1v1.1h-1.1zM964.0 465.9h1.1v1.1h-1.1zM975.2 526.4h1.1v1.1h-1.1zM963.9 497.8h1.1v1.1h-1.1zM963.6 450.8h1.1v1.1h-1.1zM962.1 463.8h1.1v1.1h-1.1zM975.6 543.3h1.1v1.1h-1.1zM964.0 457.3h1.1v1.1h-1.1zM967.9 502.7h1.1v1.1h-1.1zM968.5 499.6h1.1v1.1h-1.1zM974.1 531.8h1.1v1.1h-1.1zM963.2 489.6h1.1v1.1h-1.1zM964.0 468.7h1.1v1.1h-1.1zM965.3 487.5h1.1v1.1h-1.1zM959.0 460.2h1.1v1.1h-1.1zM974.0 482.6h1.1v1.1h-1.1zM968.5 474.8h1.1v1.1h-1.1zM964.9 448.1h1.1v1.1h-1.1zM966.5 490.3h1.1v1.1h-1.1zM971.2 482.6h1.1v1.1h-1.1zM963.4 470.2h1.1v1.1h-1.1zM975.5 543.2h1.1v1.1h-1.1zM962.6 469.8h1.1v1.1h-1.1zM972.4 486.5h1.1v1.1h-1.1zM961.7 460.6h1.1v1.1h-1.1zM972.4 530.0h1.1v1.1h-1.1zM968.9 495.0h1.1v1.1h-1.1zM960.6 470.8h1.1v1.1h-1.1zM966.4 483.3h1.1v1.1h-1.1zM970.2 531.3h1.1v1.1h-1.1zM972.4 494.5h1.1v1.1h-1.1zM975.6 502.4h1.1v1.1h-1.1zM976.4 532.1h1.1v1.1h-1.1zM977.7 533.6h1.1v1.1h-1.1zM971.7 485.0h1.1v1.1h-1.1zM973.2 490.0h1.1v1.1h-1.1zM960.8 447.5h1.1v1.1h-1.1zM970.6 475.3h1.1v1.1h-1.1zM967.8 477.7h1.1v1.1h-1.1zM967.4 491.0h1.1v1.1h-1.1zM974.0 514.2h1.1v1.1h-1.1zM971.1 542.6h1.1v1.1h-1.1zM960.1 453.2h1.1v1.1h-1.1zM971.8 540.1h1.1v1.1h-1.1zM961.2 461.8h1.1v1.1h-1.1zM978.1 510.9h1.1v1.1h-1.1zM958.0 448.8h1.1v1.1h-1.1zM975.4 513.7h1.1v1.1h-1.1zM969.6 456.7h1.1v1.1h-1.1zM963.1 471.2h1.1v1.1h-1.1zM972.6 481.8h1.1v1.1h-1.1zM971.6 540.0h1.1v1.1h-1.1zM960.8 464.7h1.1v1.1h-1.1zM967.9 509.7h1.1v1.1h-1.1zM967.3 516.0h1.1v1.1h-1.1zM969.5 528.2h1.1v1.1h-1.1zM963.7 467.4h1.1v1.1h-1.1zM967.4 501.6h1.1v1.1h-1.1zM964.4 492.4h1.1v1.1h-1.1zM973.9 503.3h1.1v1.1h-1.1zM971.3 470.3h1.1v1.1h-1.1zM975.7 496.7h1.1v1.1h-1.1zM974.3 494.1h1.1v1.1h-1.1zM970.0 497.2h1.1v1.1h-1.1zM966.0 502.7h1.1v1.1h-1.1zM959.3 448.1h1.1v1.1h-1.1zM968.9 494.9h1.1v1.1h-1.1zM967.9 515.6h1.1v1.1h-1.1zM969.6 485.1h1.1v1.1h-1.1zM981.6 544.6h1.1v1.1h-1.1zM970.2 512.4h1.1v1.1h-1.1zM962.6 450.0h1.1v1.1h-1.1zM967.0 517.5h1.1v1.1h-1.1zM961.7 481.5h1.1v1.1h-1.1zM970.5 499.2h1.1v1.1h-1.1zM981.3 538.1h1.1v1.1h-1.1zM971.4 520.7h1.1v1.1h-1.1zM963.4 482.1h1.1v1.1h-1.1zM968.7 484.3h1.1v1.1h-1.1zM924.2 623.6h1.1v1.1h-1.1zM968.2 587.9h1.1v1.1h-1.1zM939.3 612.6h1.1v1.1h-1.1zM886.9 663.0h1.1v1.1h-1.1zM886.1 662.4h1.1v1.1h-1.1zM930.1 624.3h1.1v1.1h-1.1zM925.5 619.9h1.1v1.1h-1.1zM906.9 639.0h1.1v1.1h-1.1zM952.9 603.2h1.1v1.1h-1.1zM955.5 597.6h1.1v1.1h-1.1zM909.6 636.7h1.1v1.1h-1.1zM989.3 565.5h1.1v1.1h-1.1zM877.5 668.4h1.1v1.1h-1.1zM990.5 569.5h1.1v1.1h-1.1zM997.0 565.0h1.1v1.1h-1.1zM872.4 672.3h1.1v1.1h-1.1zM906.4 639.4h1.1v1.1h-1.1zM873.9 670.9h1.1v1.1h-1.1zM912.9 635.5h1.1v1.1h-1.1zM902.5 645.3h1.1v1.1h-1.1zM906.9 646.0h1.1v1.1h-1.1zM907.2 642.7h1.1v1.1h-1.1zM896.6 656.6h1.1v1.1h-1.1zM974.6 587.1h1.1v1.1h-1.1zM890.1 652.6h1.1v1.1h-1.1zM909.3 641.9h1.1v1.1h-1.1zM884.5 659.2h1.1v1.1h-1.1zM922.4 631.4h1.1v1.1h-1.1zM956.1 599.0h1.1v1.1h-1.1zM953.9 600.9h1.1v1.1h-1.1zM907.7 636.5h1.1v1.1h-1.1zM988.3 568.3h1.1v1.1h-1.1zM993.0 569.4h1.1v1.1h-1.1zM887.4 659.2h1.1v1.1h-1.1zM873.7 673.1h1.1v1.1h-1.1zM994.8 564.6h1.1v1.1h-1.1zM914.4 630.5h1.1v1.1h-1.1zM865.3 680.4h1.1v1.1h-1.1zM943.3 614.4h1.1v1.1h-1.1zM911.7 641.6h1.1v1.1h-1.1zM978.6 583.6h1.1v1.1h-1.1zM994.2 561.5h1.1v1.1h-1.1zM976.9 573.7h1.1v1.1h-1.1zM982.0 570.3h1.1v1.1h-1.1zM981.7 580.9h1.1v1.1h-1.1zM901.6 650.4h1.1v1.1h-1.1zM900.0 652.5h1.1v1.1h-1.1zM987.6 566.3h1.1v1.1h-1.1zM898.6 645.7h1.1v1.1h-1.1zM901.1 652.8h1.1v1.1h-1.1zM910.8 636.4h1.1v1.1h-1.1zM931.9 614.7h1.1v1.1h-1.1zM959.3 589.6h1.1v1.1h-1.1zM903.2 651.7h1.1v1.1h-1.1zM993.1 562.9h1.1v1.1h-1.1zM889.5 663.3h1.1v1.1h-1.1zM953.1 598.0h1.1v1.1h-1.1zM971.6 579.7h1.1v1.1h-1.1zM933.7 623.6h1.1v1.1h-1.1zM946.5 605.9h1.1v1.1h-1.1zM936.4 613.8h1.1v1.1h-1.1zM974.8 577.6h1.1v1.1h-1.1zM946.6 604.9h1.1v1.1h-1.1zM912.5 638.5h1.1v1.1h-1.1zM942.8 606.7h1.1v1.1h-1.1zM868.2 674.0h1.1v1.1h-1.1zM921.6 631.8h1.1v1.1h-1.1zM985.0 566.3h1.1v1.1h-1.1zM900.2 644.6h1.1v1.1h-1.1zM951.0 601.4h1.1v1.1h-1.1zM863.6 677.6h1.1v1.1h-1.1zM916.9 635.8h1.1v1.1h-1.1zM936.5 611.1h1.1v1.1h-1.1zM944.6 606.2h1.1v1.1h-1.1zM913.3 631.9h1.1v1.1h-1.1zM889.5 660.8h1.1v1.1h-1.1zM997.2 563.9h1.1v1.1h-1.1zM939.1 612.4h1.1v1.1h-1.1zM884.8 657.8h1.1v1.1h-1.1zM988.3 565.0h1.1v1.1h-1.1zM885.5 657.4h1.1v1.1h-1.1zM921.0 632.5h1.1v1.1h-1.1zM880.6 662.5h1.1v1.1h-1.1zM902.1 641.8h1.1v1.1h-1.1zM952.2 606.7h1.1v1.1h-1.1zM920.3 626.8h1.1v1.1h-1.1zM967.7 584.6h1.1v1.1h-1.1zM873.3 676.1h1.1v1.1h-1.1zM913.9 634.0h1.1v1.1h-1.1zM935.7 620.1h1.1v1.1h-1.1zM960.5 591.1h1.1v1.1h-1.1zM890.6 657.7h1.1v1.1h-1.1zM982.4 570.7h1.1v1.1h-1.1zM894.6 656.9h1.1v1.1h-1.1zM916.3 629.3h1.1v1.1h-1.1zM877.8 668.5h1.1v1.1h-1.1zM931.8 618.9h1.1v1.1h-1.1zM972.6 587.0h1.1v1.1h-1.1zM970.6 582.5h1.1v1.1h-1.1zM947.2 605.4h1.1v1.1h-1.1zM942.2 610.5h1.1v1.1h-1.1zM978.8 583.1h1.1v1.1h-1.1zM863.7 683.0h1.1v1.1h-1.1zM981.0 574.0h1.1v1.1h-1.1zM893.0 659.2h1.1v1.1h-1.1zM917.2 635.1h1.1v1.1h-1.1zM929.6 627.9h1.1v1.1h-1.1zM988.5 562.9h1.1v1.1h-1.1zM880.5 666.5h1.1v1.1h-1.1zM921.7 632.0h1.1v1.1h-1.1zM892.5 656.4h1.1v1.1h-1.1zM868.1 674.3h1.1v1.1h-1.1zM883.9 657.6h1.1v1.1h-1.1zM964.9 595.8h1.1v1.1h-1.1zM971.1 588.5h1.1v1.1h-1.1zM987.5 575.2h1.1v1.1h-1.1zM919.4 626.8h1.1v1.1h-1.1zM932.1 614.3h1.1v1.1h-1.1zM877.2 674.6h1.1v1.1h-1.1zM916.8 634.8h1.1v1.1h-1.1zM977.2 573.5h1.1v1.1h-1.1zM961.3 592.7h1.1v1.1h-1.1zM907.7 636.2h1.1v1.1h-1.1zM907.3 643.5h1.1v1.1h-1.1zM938.2 618.4h1.1v1.1h-1.1zM864.2 675.1h1.1v1.1h-1.1zM969.2 591.9h1.1v1.1h-1.1zM962.7 593.9h1.1v1.1h-1.1zM873.1 668.1h1.1v1.1h-1.1zM887.0 665.9h1.1v1.1h-1.1zM889.8 655.4h1.1v1.1h-1.1zM906.8 636.7h1.1v1.1h-1.1zM990.7 571.2h1.1v1.1h-1.1zM892.6 650.1h1.1v1.1h-1.1zM906.9 645.0h1.1v1.1h-1.1zM915.5 631.6h1.1v1.1h-1.1zM983.0 576.0h1.1v1.1h-1.1zM963.9 595.6h1.1v1.1h-1.1zM933.8 622.3h1.1v1.1h-1.1zM966.3 593.2h1.1v1.1h-1.1zM908.5 647.0h1.1v1.1h-1.1zM902.1 650.5h1.1v1.1h-1.1zM988.6 563.6h1.1v1.1h-1.1zM963.9 585.8h1.1v1.1h-1.1zM878.0 663.9h1.1v1.1h-1.1zM977.6 579.3h1.1v1.1h-1.1zM980.4 571.0h1.1v1.1h-1.1zM882.8 662.7h1.1v1.1h-1.1zM936.6 617.7h1.1v1.1h-1.1zM886.3 661.4h1.1v1.1h-1.1zM914.3 640.1h1.1v1.1h-1.1zM969.1 591.8h1.1v1.1h-1.1zM900.4 647.7h1.1v1.1h-1.1zM974.4 577.1h1.1v1.1h-1.1zM961.0 594.8h1.1v1.1h-1.1zM976.6 582.4h1.1v1.1h-1.1zM885.0 664.3h1.1v1.1h-1.1zM973.6 582.4h1.1v1.1h-1.1zM951.1 597.7h1.1v1.1h-1.1zM977.8 572.7h1.1v1.1h-1.1zM986.0 566.3h1.1v1.1h-1.1zM908.6 644.5h1.1v1.1h-1.1zM933.6 621.0h1.1v1.1h-1.1zM963.4 595.2h1.1v1.1h-1.1zM944.4 602.7h1.1v1.1h-1.1zM860.3 679.4h1.1v1.1h-1.1zM984.2 575.3h1.1v1.1h-1.1zM879.1 673.0h1.1v1.1h-1.1zM900.3 651.0h1.1v1.1h-1.1zM868.3 683.2h1.1v1.1h-1.1zM889.3 660.3h1.1v1.1h-1.1zM980.3 582.3h1.1v1.1h-1.1zM884.8 662.1h1.1v1.1h-1.1zM971.6 584.9h1.1v1.1h-1.1zM876.0 673.8h1.1v1.1h-1.1zM921.9 633.3h1.1v1.1h-1.1zM970.3 582.0h1.1v1.1h-1.1zM902.9 649.8h1.1v1.1h-1.1zM987.9 574.4h1.1v1.1h-1.1zM914.8 635.4h1.1v1.1h-1.1zM961.2 597.1h1.1v1.1h-1.1zM913.0 634.5h1.1v1.1h-1.1zM887.2 659.3h1.1v1.1h-1.1zM971.6 589.4h1.1v1.1h-1.1zM898.8 650.9h1.1v1.1h-1.1zM902.4 652.0h1.1v1.1h-1.1zM888.8 660.8h1.1v1.1h-1.1zM881.5 661.0h1.1v1.1h-1.1zM933.1 624.7h1.1v1.1h-1.1zM874.7 671.9h1.1v1.1h-1.1zM881.0 668.7h1.1v1.1h-1.1zM969.1 582.3h1.1v1.1h-1.1zM949.0 608.6h1.1v1.1h-1.1zM945.9 606.2h1.1v1.1h-1.1zM995.2 562.6h1.1v1.1h-1.1zM936.4 615.7h1.1v1.1h-1.1zM978.6 575.2h1.1v1.1h-1.1zM884.8 658.0h1.1v1.1h-1.1zM951.9 599.4h1.1v1.1h-1.1zM943.6 606.4h1.1v1.1h-1.1zM985.5 567.0h1.1v1.1h-1.1zM868.7 677.0h1.1v1.1h-1.1zM927.3 623.7h1.1v1.1h-1.1zM927.2 630.0h1.1v1.1h-1.1zM868.6 680.4h1.1v1.1h-1.1zM974.0 586.8h1.1v1.1h-1.1zM960.6 590.2h1.1v1.1h-1.1zM994.4 568.5h1.1v1.1h-1.1zM904.6 648.3h1.1v1.1h-1.1zM993.0 563.6h1.1v1.1h-1.1zM918.9 631.4h1.1v1.1h-1.1zM904.6 649.4h1.1v1.1h-1.1zM878.7 665.3h1.1v1.1h-1.1zM992.2 570.1h1.1v1.1h-1.1zM930.1 621.5h1.1v1.1h-1.1zM960.9 598.3h1.1v1.1h-1.1zM944.0 613.4h1.1v1.1h-1.1zM914.8 631.0h1.1v1.1h-1.1zM975.9 579.4h1.1v1.1h-1.1zM898.4 654.2h1.1v1.1h-1.1zM883.1 658.6h1.1v1.1h-1.1zM944.6 609.5h1.1v1.1h-1.1zM883.8 663.0h1.1v1.1h-1.1zM940.5 606.8h1.1v1.1h-1.1zM893.3 656.7h1.1v1.1h-1.1zM964.9 592.2h1.1v1.1h-1.1zM935.0 611.4h1.1v1.1h-1.1zM886.2 656.2h1.1v1.1h-1.1zM885.1 657.9h1.1v1.1h-1.1zM988.7 568.5h1.1v1.1h-1.1zM865.6 674.5h1.1v1.1h-1.1zM963.2 592.7h1.1v1.1h-1.1zM912.4 639.2h1.1v1.1h-1.1zM927.7 628.9h1.1v1.1h-1.1zM938.2 614.2h1.1v1.1h-1.1zM995.4 567.1h1.1v1.1h-1.1zM864.9 677.0h1.1v1.1h-1.1zM870.2 674.0h1.1v1.1h-1.1zM885.7 657.0h1.1v1.1h-1.1zM880.8 671.7h1.1v1.1h-1.1zM911.8 640.9h1.1v1.1h-1.1zM906.8 645.3h1.1v1.1h-1.1zM921.1 624.6h1.1v1.1h-1.1zM914.6 638.6h1.1v1.1h-1.1zM927.0 625.2h1.1v1.1h-1.1zM870.4 678.0h1.1v1.1h-1.1zM954.3 597.9h1.1v1.1h-1.1zM979.3 576.0h1.1v1.1h-1.1zM868.3 677.1h1.1v1.1h-1.1zM960.4 594.7h1.1v1.1h-1.1zM926.9 628.7h1.1v1.1h-1.1zM981.7 579.5h1.1v1.1h-1.1zM957.4 598.1h1.1v1.1h-1.1zM959.0 598.6h1.1v1.1h-1.1zM984.0 572.4h1.1v1.1h-1.1zM883.3 662.5h1.1v1.1h-1.1zM919.0 629.8h1.1v1.1h-1.1zM967.9 585.0h1.1v1.1h-1.1zM934.2 617.3h1.1v1.1h-1.1zM914.4 636.1h1.1v1.1h-1.1zM956.1 601.2h1.1v1.1h-1.1zM966.3 588.7h1.1v1.1h-1.1zM944.3 607.7h1.1v1.1h-1.1zM995.3 564.6h1.1v1.1h-1.1zM882.6 667.6h1.1v1.1h-1.1zM921.8 629.2h1.1v1.1h-1.1zM955.0 593.2h1.1v1.1h-1.1zM954.9 595.9h1.1v1.1h-1.1zM977.4 584.1h1.1v1.1h-1.1zM880.1 667.4h1.1v1.1h-1.1zM988.4 570.4h1.1v1.1h-1.1zM935.9 613.5h1.1v1.1h-1.1zM983.0 577.1h1.1v1.1h-1.1zM866.6 676.0h1.1v1.1h-1.1zM976.3 581.8h1.1v1.1h-1.1zM947.9 603.4h1.1v1.1h-1.1zM911.6 634.0h1.1v1.1h-1.1zM886.3 660.9h1.1v1.1h-1.1zM895.9 649.4h1.1v1.1h-1.1zM894.8 653.7h1.1v1.1h-1.1zM890.0 655.2h1.1v1.1h-1.1zM876.2 674.7h1.1v1.1h-1.1zM882.8 670.3h1.1v1.1h-1.1zM893.3 653.7h1.1v1.1h-1.1zM926.8 619.0h1.1v1.1h-1.1zM920.2 631.5h1.1v1.1h-1.1zM889.2 654.0h1.1v1.1h-1.1zM915.7 636.0h1.1v1.1h-1.1zM935.9 616.9h1.1v1.1h-1.1zM900.8 650.6h1.1v1.1h-1.1zM943.5 608.8h1.1v1.1h-1.1zM945.7 609.6h1.1v1.1h-1.1zM888.9 654.5h1.1v1.1h-1.1zM929.7 622.6h1.1v1.1h-1.1zM972.6 585.6h1.1v1.1h-1.1zM976.2 579.1h1.1v1.1h-1.1zM920.9 634.9h1.1v1.1h-1.1zM874.3 674.1h1.1v1.1h-1.1zM881.4 661.4h1.1v1.1h-1.1zM869.8 679.5h1.1v1.1h-1.1zM936.6 610.7h1.1v1.1h-1.1zM997.3 566.5h1.1v1.1h-1.1zM920.6 630.2h1.1v1.1h-1.1zM871.5 671.1h1.1v1.1h-1.1zM921.1 623.6h1.1v1.1h-1.1zM926.8 624.3h1.1v1.1h-1.1zM905.2 645.4h1.1v1.1h-1.1zM947.7 604.6h1.1v1.1h-1.1zM946.4 601.4h1.1v1.1h-1.1zM905.6 643.4h1.1v1.1h-1.1zM983.5 574.9h1.1v1.1h-1.1zM942.1 610.0h1.1v1.1h-1.1zM917.1 628.7h1.1v1.1h-1.1zM867.4 678.3h1.1v1.1h-1.1zM936.5 614.3h1.1v1.1h-1.1zM864.0 683.1h1.1v1.1h-1.1zM923.3 623.8h1.1v1.1h-1.1zM974.3 583.9h1.1v1.1h-1.1zM863.5 677.7h1.1v1.1h-1.1zM929.9 626.4h1.1v1.1h-1.1zM875.5 668.5h1.1v1.1h-1.1zM883.5 657.6h1.1v1.1h-1.1zM878.0 669.6h1.1v1.1h-1.1zM976.4 582.4h1.1v1.1h-1.1zM927.7 623.7h1.1v1.1h-1.1zM972.8 586.9h1.1v1.1h-1.1zM911.3 637.3h1.1v1.1h-1.1zM945.9 601.4h1.1v1.1h-1.1zM913.8 641.8h1.1v1.1h-1.1zM939.3 609.7h1.1v1.1h-1.1zM953.9 597.8h1.1v1.1h-1.1zM996.6 563.9h1.1v1.1h-1.1zM883.1 662.9h1.1v1.1h-1.1zM908.7 644.6h1.1v1.1h-1.1zM929.2 621.7h1.1v1.1h-1.1zM959.6 593.2h1.1v1.1h-1.1zM922.1 622.8h1.1v1.1h-1.1zM919.9 631.9h1.1v1.1h-1.1zM981.8 579.1h1.1v1.1h-1.1zM897.0 656.2h1.1v1.1h-1.1zM984.6 576.4h1.1v1.1h-1.1zM924.3 622.9h1.1v1.1h-1.1zM912.3 633.9h1.1v1.1h-1.1zM990.6 572.9h1.1v1.1h-1.1zM894.2 656.1h1.1v1.1h-1.1zM901.4 649.2h1.1v1.1h-1.1zM974.8 584.1h1.1v1.1h-1.1zM980.3 571.4h1.1v1.1h-1.1zM919.2 633.2h1.1v1.1h-1.1zM936.6 617.0h1.1v1.1h-1.1zM986.3 566.1h1.1v1.1h-1.1zM915.5 629.2h1.1v1.1h-1.1zM936.6 614.3h1.1v1.1h-1.1zM965.4 595.2h1.1v1.1h-1.1zM869.7 671.8h1.1v1.1h-1.1zM951.6 597.4h1.1v1.1h-1.1zM888.3 661.7h1.1v1.1h-1.1zM912.8 631.6h1.1v1.1h-1.1zM927.1 618.8h1.1v1.1h-1.1zM964.2 592.1h1.1v1.1h-1.1zM901.8 650.5h1.1v1.1h-1.1zM952.5 596.8h1.1v1.1h-1.1zM929.6 618.5h1.1v1.1h-1.1zM965.5 593.6h1.1v1.1h-1.1zM950.0 607.4h1.1v1.1h-1.1zM867.6 680.5h1.1v1.1h-1.1zM923.4 632.3h1.1v1.1h-1.1zM925.4 627.1h1.1v1.1h-1.1zM944.8 613.6h1.1v1.1h-1.1zM977.5 574.8h1.1v1.1h-1.1zM950.6 606.1h1.1v1.1h-1.1zM971.8 586.6h1.1v1.1h-1.1zM967.1 593.8h1.1v1.1h-1.1zM908.3 643.2h1.1v1.1h-1.1zM973.9 579.5h1.1v1.1h-1.1zM985.0 574.8h1.1v1.1h-1.1zM886.8 665.1h1.1v1.1h-1.1zM934.8 613.3h1.1v1.1h-1.1zM890.6 661.3h1.1v1.1h-1.1zM947.5 603.1h1.1v1.1h-1.1zM942.9 604.4h1.1v1.1h-1.1zM965.5 584.2h1.1v1.1h-1.1zM930.3 624.7h1.1v1.1h-1.1zM937.8 619.1h1.1v1.1h-1.1zM903.2 648.8h1.1v1.1h-1.1zM875.4 669.8h1.1v1.1h-1.1zM948.4 608.1h1.1v1.1h-1.1zM916.6 637.3h1.1v1.1h-1.1zM881.9 669.7h1.1v1.1h-1.1zM927.3 623.6h1.1v1.1h-1.1zM958.2 592.9h1.1v1.1h-1.1zM943.7 607.4h1.1v1.1h-1.1zM921.4 631.7h1.1v1.1h-1.1zM946.4 611.8h1.1v1.1h-1.1zM970.2 581.1h1.1v1.1h-1.1zM952.2 599.7h1.1v1.1h-1.1zM981.1 574.8h1.1v1.1h-1.1zM947.7 605.6h1.1v1.1h-1.1zM959.0 600.8h1.1v1.1h-1.1zM956.1 601.4h1.1v1.1h-1.1zM977.8 575.9h1.1v1.1h-1.1zM958.9 596.8h1.1v1.1h-1.1zM873.1 669.7h1.1v1.1h-1.1zM876.0 666.0h1.1v1.1h-1.1zM979.7 579.5h1.1v1.1h-1.1zM990.9 564.5h1.1v1.1h-1.1zM908.3 643.0h1.1v1.1h-1.1zM940.0 610.7h1.1v1.1h-1.1zM904.2 648.0h1.1v1.1h-1.1zM883.9 665.0h1.1v1.1h-1.1zM914.0 640.0h1.1v1.1h-1.1zM978.1 573.3h1.1v1.1h-1.1zM896.8 649.1h1.1v1.1h-1.1zM993.3 570.1h1.1v1.1h-1.1zM976.2 583.7h1.1v1.1h-1.1zM956.2 599.4h1.1v1.1h-1.1zM991.9 568.1h1.1v1.1h-1.1zM912.7 641.1h1.1v1.1h-1.1zM883.6 662.7h1.1v1.1h-1.1zM901.8 650.0h1.1v1.1h-1.1zM893.2 617.2h1.1v1.1h-1.1zM902.3 616.4h1.1v1.1h-1.1zM867.4 639.5h1.1v1.1h-1.1zM906.0 612.5h1.1v1.1h-1.1zM867.0 641.6h1.1v1.1h-1.1zM920.1 597.7h1.1v1.1h-1.1zM913.1 598.1h1.1v1.1h-1.1zM906.2 603.0h1.1v1.1h-1.1zM876.5 638.7h1.1v1.1h-1.1zM878.3 633.8h1.1v1.1h-1.1zM872.6 634.2h1.1v1.1h-1.1zM906.1 612.0h1.1v1.1h-1.1zM862.2 648.0h1.1v1.1h-1.1zM861.8 645.5h1.1v1.1h-1.1zM873.2 633.7h1.1v1.1h-1.1zM882.2 629.6h1.1v1.1h-1.1zM917.2 595.4h1.1v1.1h-1.1zM894.5 617.9h1.1v1.1h-1.1zM864.9 648.7h1.1v1.1h-1.1zM875.9 639.7h1.1v1.1h-1.1zM875.6 631.8h1.1v1.1h-1.1zM904.9 608.1h1.1v1.1h-1.1zM859.6 648.0h1.1v1.1h-1.1zM888.6 626.0h1.1v1.1h-1.1zM918.7 597.7h1.1v1.1h-1.1zM897.2 618.8h1.1v1.1h-1.1zM904.0 613.4h1.1v1.1h-1.1zM876.0 632.8h1.1v1.1h-1.1zM908.0 608.6h1.1v1.1h-1.1zM889.4 623.2h1.1v1.1h-1.1zM863.2 647.8h1.1v1.1h-1.1zM900.7 608.3h1.1v1.1h-1.1zM912.4 601.2h1.1v1.1h-1.1zM898.9 610.6h1.1v1.1h-1.1zM885.6 623.2h1.1v1.1h-1.1zM910.1 602.1h1.1v1.1h-1.1zM884.0 627.9h1.1v1.1h-1.1zM871.4 635.3h1.1v1.1h-1.1zM915.6 601.3h1.1v1.1h-1.1zM900.4 615.8h1.1v1.1h-1.1zM919.0 598.2h1.1v1.1h-1.1zM908.1 603.5h1.1v1.1h-1.1zM895.4 621.4h1.1v1.1h-1.1zM901.3 612.2h1.1v1.1h-1.1zM900.5 616.2h1.1v1.1h-1.1zM919.8 600.5h1.1v1.1h-1.1zM857.5 648.7h1.1v1.1h-1.1zM915.2 597.0h1.1v1.1h-1.1zM859.3 649.1h1.1v1.1h-1.1zM914.9 599.7h1.1v1.1h-1.1zM895.9 620.1h1.1v1.1h-1.1zM889.9 627.4h1.1v1.1h-1.1zM862.7 645.1h1.1v1.1h-1.1zM879.6 626.7h1.1v1.1h-1.1zM881.7 632.2h1.1v1.1h-1.1zM908.0 609.7h1.1v1.1h-1.1zM918.5 593.4h1.1v1.1h-1.1zM869.6 642.6h1.1v1.1h-1.1zM909.2 603.3h1.1v1.1h-1.1zM865.9 639.2h1.1v1.1h-1.1zM909.5 601.4h1.1v1.1h-1.1zM867.8 639.5h1.1v1.1h-1.1zM902.7 614.0h1.1v1.1h-1.1zM870.4 641.7h1.1v1.1h-1.1zM898.1 614.2h1.1v1.1h-1.1zM896.5 612.6h1.1v1.1h-1.1zM909.0 609.9h1.1v1.1h-1.1zM885.1 625.1h1.1v1.1h-1.1zM868.7 639.1h1.1v1.1h-1.1zM862.0 642.5h1.1v1.1h-1.1zM890.4 621.7h1.1v1.1h-1.1zM912.8 603.7h1.1v1.1h-1.1zM887.1 629.2h1.1v1.1h-1.1zM879.9 634.8h1.1v1.1h-1.1zM891.1 616.0h1.1v1.1h-1.1zM918.5 601.3h1.1v1.1h-1.1zM895.5 620.4h1.1v1.1h-1.1zM878.6 637.7h1.1v1.1h-1.1zM866.5 639.4h1.1v1.1h-1.1zM872.3 638.9h1.1v1.1h-1.1zM902.9 608.7h1.1v1.1h-1.1zM889.5 623.3h1.1v1.1h-1.1zM900.6 613.2h1.1v1.1h-1.1zM877.8 629.6h1.1v1.1h-1.1zM866.3 647.1h1.1v1.1h-1.1zM903.3 610.7h1.1v1.1h-1.1zM886.8 626.6h1.1v1.1h-1.1zM911.5 607.1h1.1v1.1h-1.1zM901.4 612.2h1.1v1.1h-1.1zM858.0 646.5h1.1v1.1h-1.1zM864.4 640.1h1.1v1.1h-1.1zM860.2 647.7h1.1v1.1h-1.1zM872.7 642.4h1.1v1.1h-1.1zM878.3 631.5h1.1v1.1h-1.1zM902.5 610.0h1.1v1.1h-1.1zM861.5 648.0h1.1v1.1h-1.1zM881.8 631.6h1.1v1.1h-1.1zM897.9 610.8h1.1v1.1h-1.1zM921.6 596.9h1.1v1.1h-1.1zM879.0 632.5h1.1v1.1h-1.1zM915.4 597.4h1.1v1.1h-1.1zM897.7 614.2h1.1v1.1h-1.1zM895.2 617.1h1.1v1.1h-1.1zM886.5 626.3h1.1v1.1h-1.1zM916.2 601.9h1.1v1.1h-1.1zM865.1 644.0h1.1v1.1h-1.1zM912.6 597.7h1.1v1.1h-1.1zM907.8 610.4h1.1v1.1h-1.1zM889.4 625.3h1.1v1.1h-1.1zM890.4 621.1h1.1v1.1h-1.1zM907.0 606.0h1.1v1.1h-1.1zM914.5 599.8h1.1v1.1h-1.1zM886.7 629.6h1.1v1.1h-1.1zM898.1 619.3h1.1v1.1h-1.1zM891.9 616.4h1.1v1.1h-1.1zM885.7 623.6h1.1v1.1h-1.1zM875.8 639.0h1.1v1.1h-1.1zM857.8 648.7h1.1v1.1h-1.1zM913.5 597.3h1.1v1.1h-1.1zM898.6 617.8h1.1v1.1h-1.1zM860.6 647.9h1.1v1.1h-1.1zM874.6 639.9h1.1v1.1h-1.1zM874.9 640.4h1.1v1.1h-1.1zM907.4 607.8h1.1v1.1h-1.1zM920.2 593.8h1.1v1.1h-1.1zM909.3 606.8h1.1v1.1h-1.1zM877.3 634.3h1.1v1.1h-1.1zM864.8 643.5h1.1v1.1h-1.1zM866.1 642.9h1.1v1.1h-1.1zM861.6 643.7h1.1v1.1h-1.1zM909.7 601.6h1.1v1.1h-1.1zM898.7 611.4h1.1v1.1h-1.1zM876.9 630.4h1.1v1.1h-1.1zM914.6 601.2h1.1v1.1h-1.1zM872.6 632.9h1.1v1.1h-1.1zM878.4 637.4h1.1v1.1h-1.1zM885.6 630.3h1.1v1.1h-1.1zM885.3 623.0h1.1v1.1h-1.1zM912.3 597.4h1.1v1.1h-1.1zM880.3 633.5h1.1v1.1h-1.1zM909.7 604.8h1.1v1.1h-1.1zM868.2 640.9h1.1v1.1h-1.1zM917.1 602.8h1.1v1.1h-1.1zM913.1 598.0h1.1v1.1h-1.1zM909.7 603.7h1.1v1.1h-1.1zM902.3 608.9h1.1v1.1h-1.1zM899.5 617.3h1.1v1.1h-1.1zM866.1 643.2h1.1v1.1h-1.1zM876.4 631.0h1.1v1.1h-1.1zM864.2 650.5h1.1v1.1h-1.1zM901.9 615.1h1.1v1.1h-1.1zM887.9 619.9h1.1v1.1h-1.1zM873.5 641.9h1.1v1.1h-1.1zM908.4 602.0h1.1v1.1h-1.1zM879.2 632.9h1.1v1.1h-1.1zM893.4 622.7h1.1v1.1h-1.1zM868.8 642.4h1.1v1.1h-1.1zM865.8 642.7h1.1v1.1h-1.1zM917.8 598.8h1.1v1.1h-1.1zM905.9 603.5h1.1v1.1h-1.1zM561.7 689.4h1.1v1.1h-1.1zM588.8 696.1h1.1v1.1h-1.1zM571.5 686.4h1.1v1.1h-1.1zM575.4 690.8h1.1v1.1h-1.1zM599.9 697.6h1.1v1.1h-1.1zM577.3 695.9h1.1v1.1h-1.1zM573.8 682.0h1.1v1.1h-1.1zM595.5 701.5h1.1v1.1h-1.1zM557.7 684.8h1.1v1.1h-1.1zM583.1 692.0h1.1v1.1h-1.1zM584.1 691.5h1.1v1.1h-1.1zM569.5 680.7h1.1v1.1h-1.1zM536.9 679.6h1.1v1.1h-1.1zM566.7 682.0h1.1v1.1h-1.1zM547.6 674.3h1.1v1.1h-1.1zM561.6 681.7h1.1v1.1h-1.1zM576.6 692.2h1.1v1.1h-1.1zM552.7 675.1h1.1v1.1h-1.1zM543.1 673.7h1.1v1.1h-1.1zM582.4 688.3h1.1v1.1h-1.1zM554.5 680.5h1.1v1.1h-1.1zM560.2 684.8h1.1v1.1h-1.1zM565.7 686.3h1.1v1.1h-1.1zM595.4 699.0h1.1v1.1h-1.1zM582.2 685.3h1.1v1.1h-1.1zM569.7 688.4h1.1v1.1h-1.1zM583.8 695.7h1.1v1.1h-1.1zM576.8 694.2h1.1v1.1h-1.1zM601.1 694.4h1.1v1.1h-1.1zM571.8 688.2h1.1v1.1h-1.1zM564.1 687.0h1.1v1.1h-1.1zM587.6 699.4h1.1v1.1h-1.1zM580.5 693.4h1.1v1.1h-1.1zM555.5 680.4h1.1v1.1h-1.1zM541.6 677.6h1.1v1.1h-1.1zM543.7 675.2h1.1v1.1h-1.1zM593.5 700.3h1.1v1.1h-1.1zM566.4 679.1h1.1v1.1h-1.1zM579.2 686.9h1.1v1.1h-1.1zM575.2 684.1h1.1v1.1h-1.1zM595.7 697.2h1.1v1.1h-1.1zM543.7 679.2h1.1v1.1h-1.1zM582.0 697.7h1.1v1.1h-1.1zM588.8 697.2h1.1v1.1h-1.1zM555.4 684.6h1.1v1.1h-1.1zM574.0 692.3h1.1v1.1h-1.1zM564.5 679.9h1.1v1.1h-1.1zM558.8 686.2h1.1v1.1h-1.1zM556.9 675.6h1.1v1.1h-1.1zM561.1 688.7h1.1v1.1h-1.1zM551.9 674.7h1.1v1.1h-1.1zM577.3 694.4h1.1v1.1h-1.1zM588.5 693.7h1.1v1.1h-1.1zM546.8 675.7h1.1v1.1h-1.1zM542.0 679.3h1.1v1.1h-1.1zM580.9 687.9h1.1v1.1h-1.1zM559.6 683.9h1.1v1.1h-1.1zM557.5 683.9h1.1v1.1h-1.1zM596.0 698.2h1.1v1.1h-1.1zM597.7 696.2h1.1v1.1h-1.1zM579.3 690.6h1.1v1.1h-1.1zM562.1 686.8h1.1v1.1h-1.1zM569.3 692.8h1.1v1.1h-1.1zM543.4 675.4h1.1v1.1h-1.1zM537.3 679.5h1.1v1.1h-1.1zM563.2 681.2h1.1v1.1h-1.1zM577.9 695.2h1.1v1.1h-1.1zM588.7 698.8h1.1v1.1h-1.1zM551.0 684.5h1.1v1.1h-1.1zM549.6 679.7h1.1v1.1h-1.1zM567.2 684.5h1.1v1.1h-1.1zM566.5 683.4h1.1v1.1h-1.1zM562.2 685.9h1.1v1.1h-1.1zM553.3 683.3h1.1v1.1h-1.1zM557.4 678.4h1.1v1.1h-1.1zM551.4 681.9h1.1v1.1h-1.1zM554.6 674.5h1.1v1.1h-1.1zM571.1 690.1h1.1v1.1h-1.1zM569.7 681.0h1.1v1.1h-1.1zM589.6 700.9h1.1v1.1h-1.1zM603.4 248.9h1.1v1.1h-1.1zM649.7 212.5h1.1v1.1h-1.1zM683.3 186.5h1.1v1.1h-1.1zM646.1 213.5h1.1v1.1h-1.1zM531.1 299.8h1.1v1.1h-1.1zM537.3 297.5h1.1v1.1h-1.1zM614.5 237.6h1.1v1.1h-1.1zM675.8 192.9h1.1v1.1h-1.1zM550.4 285.6h1.1v1.1h-1.1zM645.6 219.0h1.1v1.1h-1.1zM552.0 283.5h1.1v1.1h-1.1zM649.9 211.5h1.1v1.1h-1.1zM682.9 188.4h1.1v1.1h-1.1zM627.8 228.7h1.1v1.1h-1.1zM654.1 209.7h1.1v1.1h-1.1zM580.2 267.9h1.1v1.1h-1.1zM545.5 292.8h1.1v1.1h-1.1zM538.6 297.4h1.1v1.1h-1.1zM592.4 258.5h1.1v1.1h-1.1zM537.5 297.8h1.1v1.1h-1.1zM593.8 257.8h1.1v1.1h-1.1zM677.4 193.3h1.1v1.1h-1.1zM562.4 277.1h1.1v1.1h-1.1zM569.0 273.3h1.1v1.1h-1.1zM563.5 276.0h1.1v1.1h-1.1zM648.1 215.4h1.1v1.1h-1.1zM576.4 271.3h1.1v1.1h-1.1zM562.2 279.3h1.1v1.1h-1.1zM553.6 287.5h1.1v1.1h-1.1zM664.4 200.8h1.1v1.1h-1.1zM647.5 217.0h1.1v1.1h-1.1zM571.9 270.5h1.1v1.1h-1.1zM605.7 248.7h1.1v1.1h-1.1zM553.9 286.2h1.1v1.1h-1.1zM622.0 233.7h1.1v1.1h-1.1zM620.4 237.6h1.1v1.1h-1.1zM562.1 281.3h1.1v1.1h-1.1zM585.6 263.1h1.1v1.1h-1.1zM663.2 201.2h1.1v1.1h-1.1zM665.7 204.4h1.1v1.1h-1.1zM573.4 267.5h1.1v1.1h-1.1zM546.8 293.3h1.1v1.1h-1.1zM530.5 305.1h1.1v1.1h-1.1zM552.3 287.7h1.1v1.1h-1.1zM542.2 291.7h1.1v1.1h-1.1zM634.4 222.2h1.1v1.1h-1.1zM582.7 266.1h1.1v1.1h-1.1zM642.1 221.4h1.1v1.1h-1.1zM681.1 186.8h1.1v1.1h-1.1zM565.7 278.0h1.1v1.1h-1.1zM635.3 221.2h1.1v1.1h-1.1zM606.7 243.8h1.1v1.1h-1.1zM594.6 252.1h1.1v1.1h-1.1zM532.4 304.2h1.1v1.1h-1.1zM578.9 268.7h1.1v1.1h-1.1zM546.8 290.3h1.1v1.1h-1.1zM549.0 288.3h1.1v1.1h-1.1zM556.6 284.2h1.1v1.1h-1.1zM551.9 288.1h1.1v1.1h-1.1zM605.7 243.8h1.1v1.1h-1.1zM583.6 262.8h1.1v1.1h-1.1zM672.4 195.3h1.1v1.1h-1.1zM563.2 281.0h1.1v1.1h-1.1zM668.0 201.1h1.1v1.1h-1.1zM569.9 271.0h1.1v1.1h-1.1zM568.3 271.6h1.1v1.1h-1.1zM534.6 299.5h1.1v1.1h-1.1zM592.4 256.6h1.1v1.1h-1.1zM583.6 259.7h1.1v1.1h-1.1zM636.9 223.8h1.1v1.1h-1.1zM613.9 240.4h1.1v1.1h-1.1zM638.3 224.9h1.1v1.1h-1.1zM666.5 202.1h1.1v1.1h-1.1zM590.3 256.6h1.1v1.1h-1.1zM595.4 256.9h1.1v1.1h-1.1zM588.6 258.4h1.1v1.1h-1.1zM591.5 254.7h1.1v1.1h-1.1zM684.0 184.5h1.1v1.1h-1.1zM625.1 234.4h1.1v1.1h-1.1zM568.4 274.9h1.1v1.1h-1.1zM586.6 259.0h1.1v1.1h-1.1zM558.0 279.6h1.1v1.1h-1.1zM661.8 206.0h1.1v1.1h-1.1zM669.9 195.3h1.1v1.1h-1.1zM636.9 221.8h1.1v1.1h-1.1zM630.0 228.4h1.1v1.1h-1.1zM579.1 269.2h1.1v1.1h-1.1zM528.7 305.5h1.1v1.1h-1.1zM662.6 203.7h1.1v1.1h-1.1zM622.8 236.5h1.1v1.1h-1.1zM565.2 277.4h1.1v1.1h-1.1zM644.8 216.2h1.1v1.1h-1.1zM640.0 219.9h1.1v1.1h-1.1zM611.3 242.8h1.1v1.1h-1.1zM634.2 223.8h1.1v1.1h-1.1zM627.3 230.4h1.1v1.1h-1.1zM563.4 278.6h1.1v1.1h-1.1zM570.9 274.9h1.1v1.1h-1.1zM603.2 249.5h1.1v1.1h-1.1zM610.2 242.8h1.1v1.1h-1.1z" fill="#e60000"/>
<path d="M643.6,313.9L646.8,314.6L649.9,315.4L653.0,316.5L656.0,317.7L659.0,319.2L661.9,320.9L664.7,322.8L667.4,324.8L670.0,327.1L672.5,329.5L674.8,332.1L677.0,334.9L678.6,338.0L680.0,341.2L681.2,344.5L682.2,347.8L683.0,351.2L683.5,354.7L683.9,358.2L684.0,361.7L683.9,365.2L683.6,368.7L683.1,372.1L682.3,375.5L681.4,378.9L680.2,382.2L678.9,385.4L677.3,388.6L675.5,391.6L673.6,394.5L671.5,397.3L669.2,400.0L666.7,402.5L664.1,404.8L661.4,407.0L658.5,409.0L655.3,410.4L652.0,411.6L648.7,412.6L645.3,413.3L642.0,413.9L638.6,414.2L635.3,414.3L632.0,414.2L628.7,413.9L625.5,413.4L622.3,412.7L619.2,411.8L619.8,408.2L622.8,408.2L625.7,408.0L628.6,407.6L631.4,407.0L634.2,406.2L636.8,405.3L639.4,404.3L641.9,403.0L644.2,401.7L646.5,400.2L648.6,398.5L650.6,396.8L652.7,395.3L654.8,393.7L656.7,392.0L658.5,390.1L660.2,388.2L661.8,386.1L663.2,383.9L664.5,381.7L665.7,379.4L666.7,377.0L667.6,374.5L668.3,372.0L668.8,369.5L669.2,366.9L669.4,364.4L669.5,361.8L669.4,359.2L669.1,356.6L668.7,354.0L668.1,351.5L667.4,349.0L666.5,346.6L665.5,344.2L664.3,341.9L663.4,339.4L662.2,337.0L661.0,334.6L659.5,332.3L657.9,330.0L656.1,327.9L654.2,325.8L652.1,323.9L649.9,322.0L647.6,320.3L645.1,318.8L642.5,317.4Z" fill="#e60000" />
<path d="M629.9,526.5L632.7,524.0L635.7,521.8L638.9,519.8L642.3,518.0L645.8,516.4L649.4,515.2L653.2,514.2L657.0,513.5L660.9,513.0L664.9,512.9L668.8,513.1L672.8,513.6L676.7,514.7L680.4,516.1L684.1,517.8L687.6,519.7L690.9,521.9L694.1,524.4L697.0,527.1L699.8,530.0L702.3,533.1L704.6,536.4L706.7,539.8L708.4,543.4L709.9,547.2L711.1,551.0L712.0,554.9L712.6,558.8L713.0,562.8L713.0,566.8L712.7,570.8L712.1,574.8L711.2,578.7L710.0,582.5L708.5,586.3L706.8,589.9L704.5,593.2L702.0,596.2L699.2,599.1L696.3,601.7L693.2,604.1L689.9,606.2L686.6,608.1L683.1,609.6L679.5,610.9L675.9,612.0L672.2,612.7L668.5,613.1L668.0,610.4L671.3,609.4L674.5,608.0L677.6,606.5L680.5,604.8L683.3,602.8L685.9,600.6L688.3,598.3L690.5,595.8L692.5,593.2L694.2,590.5L695.8,587.6L697.1,584.7L698.5,581.9L699.6,578.9L700.6,575.9L701.3,572.8L701.7,569.6L702.0,566.5L702.0,563.3L701.7,560.1L701.2,557.0L700.5,553.9L699.5,550.9L698.4,547.9L697.0,545.1L695.4,542.3L693.5,539.7L691.5,537.3L689.4,535.0L687.0,532.8L684.5,530.9L681.8,529.1L679.1,527.6L676.2,526.2L673.2,525.1L670.2,524.2L667.1,523.3L664.0,522.5L660.8,522.0L657.5,521.7L654.2,521.7L650.8,521.9L647.5,522.4L644.2,523.1L640.9,524.1L637.7,525.4L634.6,526.9L631.6,528.7Z" fill="#e60000" />
<path d="M669.5 336.2h1v1h-1zM613.3 413.8h1v1h-1zM675.9 386.6h1v1h-1zM633.6 411.8h1v1h-1zM671.3 323.9h1v1h-1zM681.5 376.1h1v1h-1zM631.7 420.5h1v1h-1zM624.5 409.4h1v1h-1zM685.8 361.3h1v1h-1zM632.7 410.4h1v1h-1zM663.5 326.5h1v1h-1zM657.7 319.7h1v1h-1zM635.8 415.2h1v1h-1zM674.9 373.1h1v1h-1zM687.9 364.2h1v1h-1zM654.0 408.0h1v1h-1zM682.5 380.0h1v1h-1zM642.3 408.8h1v1h-1zM655.7 405.7h1v1h-1zM672.8 384.4h1v1h-1zM679.4 359.6h1v1h-1zM675.2 361.4h1v1h-1zM672.1 330.1h1v1h-1zM649.8 317.8h1v1h-1zM649.3 407.8h1v1h-1zM677.1 351.7h1v1h-1zM630.0 410.1h1v1h-1zM666.1 405.9h1v1h-1zM670.7 331.4h1v1h-1zM638.0 416.1h1v1h-1zM675.5 359.9h1v1h-1zM678.8 372.1h1v1h-1zM650.3 407.7h1v1h-1zM683.3 366.4h1v1h-1zM634.2 413.2h1v1h-1zM682.5 362.1h1v1h-1zM614.9 409.7h1v1h-1zM604.7 413.2h1v1h-1zM683.6 359.7h1v1h-1zM675.1 353.1h1v1h-1zM643.7 411.5h1v1h-1zM675.4 386.7h1v1h-1zM617.4 417.8h1v1h-1zM646.7 310.6h1v1h-1zM679.2 375.9h1v1h-1zM629.2 414.4h1v1h-1zM683.9 379.5h1v1h-1zM680.4 372.0h1v1h-1zM680.4 386.2h1v1h-1zM659.9 408.8h1v1h-1zM675.4 364.8h1v1h-1zM657.1 407.7h1v1h-1zM642.8 417.1h1v1h-1zM658.7 322.7h1v1h-1zM656.8 312.1h1v1h-1zM655.5 322.5h1v1h-1zM644.9 413.6h1v1h-1zM652.2 311.7h1v1h-1zM651.6 409.7h1v1h-1zM652.3 311.5h1v1h-1zM682.2 368.2h1v1h-1zM599.5 412.1h1v1h-1zM623.7 410.7h1v1h-1zM681.0 352.8h1v1h-1zM644.7 304.5h1v1h-1zM674.9 343.6h1v1h-1zM676.8 349.9h1v1h-1zM625.7 416.2h1v1h-1zM675.7 383.9h1v1h-1zM649.5 315.8h1v1h-1zM624.0 419.3h1v1h-1zM626.2 412.3h1v1h-1zM666.8 334.2h1v1h-1zM673.1 387.7h1v1h-1zM679.4 376.3h1v1h-1zM668.3 394.5h1v1h-1zM635.5 411.0h1v1h-1zM614.6 414.6h1v1h-1zM649.6 315.7h1v1h-1zM673.8 387.3h1v1h-1zM669.9 391.5h1v1h-1zM681.3 340.8h1v1h-1zM681.4 344.5h1v1h-1zM636.1 416.1h1v1h-1zM685.5 376.0h1v1h-1zM685.2 373.9h1v1h-1zM651.3 314.8h1v1h-1zM658.8 398.3h1v1h-1zM625.3 409.9h1v1h-1zM665.1 394.6h1v1h-1zM614.1 414.5h1v1h-1zM636.2 414.8h1v1h-1zM658.9 408.5h1v1h-1zM675.4 347.0h1v1h-1zM629.3 410.9h1v1h-1zM616.0 410.2h1v1h-1zM655.4 322.3h1v1h-1zM640.4 420.0h1v1h-1zM683.3 367.7h1v1h-1zM681.4 337.4h1v1h-1zM653.4 403.9h1v1h-1zM652.6 311.6h1v1h-1zM650.7 308.8h1v1h-1zM675.6 346.8h1v1h-1zM668.0 393.8h1v1h-1zM668.5 389.6h1v1h-1zM616.6 411.9h1v1h-1zM628.8 411.0h1v1h-1zM637.5 421.0h1v1h-1zM675.4 363.1h1v1h-1zM683.3 361.1h1v1h-1zM674.2 333.8h1v1h-1zM657.1 317.6h1v1h-1zM648.5 410.4h1v1h-1zM654.1 402.8h1v1h-1zM630.9 410.5h1v1h-1zM612.4 419.9h1v1h-1zM611.2 413.2h1v1h-1zM676.9 345.8h1v1h-1zM645.1 412.6h1v1h-1zM614.5 408.3h1v1h-1zM682.9 381.5h1v1h-1zM668.4 397.8h1v1h-1zM654.0 320.7h1v1h-1zM682.3 339.9h1v1h-1zM628.1 412.0h1v1h-1zM615.5 407.7h1v1h-1zM672.4 401.7h1v1h-1zM686.7 353.9h1v1h-1zM656.7 400.1h1v1h-1zM680.0 352.8h1v1h-1zM678.6 336.5h1v1h-1zM671.8 325.1h1v1h-1zM673.8 348.1h1v1h-1zM668.0 389.0h1v1h-1zM676.2 392.8h1v1h-1zM667.9 396.9h1v1h-1zM647.7 312.1h1v1h-1zM659.0 316.0h1v1h-1zM663.6 320.7h1v1h-1zM679.6 356.4h1v1h-1zM656.7 401.9h1v1h-1zM672.1 322.4h1v1h-1zM685.0 351.6h1v1h-1zM623.1 415.0h1v1h-1zM661.5 327.3h1v1h-1zM622.6 410.2h1v1h-1zM678.1 382.0h1v1h-1zM660.6 320.1h1v1h-1zM667.5 325.2h1v1h-1zM675.4 382.9h1v1h-1zM670.0 331.0h1v1h-1zM667.7 333.9h1v1h-1zM679.4 334.4h1v1h-1zM682.0 384.7h1v1h-1zM646.3 305.6h1v1h-1zM681.7 381.8h1v1h-1zM673.1 395.1h1v1h-1zM677.0 333.4h1v1h-1zM663.6 326.3h1v1h-1zM646.7 313.4h1v1h-1zM673.6 384.3h1v1h-1zM620.8 409.5h1v1h-1zM667.5 392.7h1v1h-1zM671.1 399.6h1v1h-1zM649.3 404.8h1v1h-1zM676.8 337.1h1v1h-1zM606.7 404.5h1v1h-1zM667.2 402.0h1v1h-1zM633.5 413.2h1v1h-1zM634.4 414.6h1v1h-1zM616.1 407.6h1v1h-1zM611.5 411.7h1v1h-1zM676.0 365.7h1v1h-1zM678.3 336.1h1v1h-1zM654.4 403.2h1v1h-1zM676.4 355.3h1v1h-1zM668.2 332.4h1v1h-1zM686.7 351.2h1v1h-1zM599.8 411.9h1v1h-1zM678.7 379.0h1v1h-1zM641.3 419.3h1v1h-1zM645.5 414.4h1v1h-1zM672.5 329.5h1v1h-1zM628.1 419.2h1v1h-1zM658.7 314.8h1v1h-1zM676.8 356.1h1v1h-1zM605.9 413.2h1v1h-1zM644.4 407.9h1v1h-1zM631.6 421.1h1v1h-1zM616.8 417.6h1v1h-1zM630.7 419.4h1v1h-1zM668.3 395.9h1v1h-1zM632.1 419.1h1v1h-1zM623.7 412.7h1v1h-1zM607.5 411.9h1v1h-1zM611.8 407.7h1v1h-1zM604.9 414.3h1v1h-1zM680.1 336.7h1v1h-1zM671.0 337.4h1v1h-1zM676.5 374.4h1v1h-1zM682.9 383.1h1v1h-1zM657.3 410.0h1v1h-1zM685.2 363.4h1v1h-1zM637.9 417.0h1v1h-1zM609.6 416.7h1v1h-1zM676.0 365.5h1v1h-1zM663.4 407.7h1v1h-1zM682.1 353.6h1v1h-1zM629.9 419.3h1v1h-1zM642.6 310.7h1v1h-1zM643.1 316.0h1v1h-1zM634.0 414.1h1v1h-1zM666.8 398.1h1v1h-1zM677.1 353.7h1v1h-1zM685.7 355.9h1v1h-1zM663.4 398.4h1v1h-1zM654.9 319.2h1v1h-1zM653.0 408.5h1v1h-1zM661.9 408.5h1v1h-1zM650.3 305.3h1v1h-1zM643.2 300.7h1v1h-1zM653.1 313.8h1v1h-1zM682.8 372.6h1v1h-1zM661.4 307.1h1v1h-1zM687.6 337.9h1v1h-1zM670.7 322.8h1v1h-1zM685.1 372.9h1v1h-1zM679.5 374.8h1v1h-1zM680.6 361.0h1v1h-1zM671.3 337.1h1v1h-1zM657.2 303.8h1v1h-1zM678.4 324.3h1v1h-1zM659.0 315.8h1v1h-1zM647.7 306.6h1v1h-1zM686.2 363.9h1v1h-1zM674.5 316.8h1v1h-1zM688.4 367.2h1v1h-1zM645.7 304.7h1v1h-1zM679.6 322.0h1v1h-1zM670.4 318.7h1v1h-1zM680.6 342.9h1v1h-1zM680.5 331.2h1v1h-1zM685.6 368.2h1v1h-1zM674.0 315.2h1v1h-1zM644.8 300.9h1v1h-1zM684.9 346.7h1v1h-1zM677.2 324.3h1v1h-1zM689.5 367.0h1v1h-1zM678.0 354.3h1v1h-1zM662.2 322.5h1v1h-1zM691.2 373.7h1v1h-1zM651.9 307.6h1v1h-1zM673.9 340.4h1v1h-1zM673.5 320.0h1v1h-1zM679.5 344.2h1v1h-1zM682.2 354.8h1v1h-1zM678.0 335.1h1v1h-1zM686.9 375.5h1v1h-1zM688.7 358.3h1v1h-1zM675.2 316.7h1v1h-1zM687.6 348.7h1v1h-1zM659.2 319.6h1v1h-1zM685.1 334.9h1v1h-1zM683.4 357.5h1v1h-1zM651.0 308.5h1v1h-1zM680.5 365.1h1v1h-1zM680.0 353.0h1v1h-1zM660.4 322.8h1v1h-1zM662.8 317.9h1v1h-1zM692.0 375.4h1v1h-1zM653.6 313.4h1v1h-1zM680.4 370.9h1v1h-1zM665.0 318.6h1v1h-1zM646.8 311.2h1v1h-1zM669.4 324.0h1v1h-1zM681.2 372.9h1v1h-1zM659.7 305.8h1v1h-1zM678.5 323.6h1v1h-1zM686.9 341.2h1v1h-1zM661.6 321.8h1v1h-1zM685.0 353.9h1v1h-1zM682.1 334.5h1v1h-1zM681.8 354.0h1v1h-1zM673.3 315.8h1v1h-1zM675.4 334.9h1v1h-1zM678.8 343.4h1v1h-1zM678.3 356.1h1v1h-1zM687.0 360.5h1v1h-1zM672.8 314.9h1v1h-1zM659.1 318.0h1v1h-1zM644.8 305.7h1v1h-1zM688.2 353.1h1v1h-1zM675.6 320.9h1v1h-1zM647.3 310.6h1v1h-1zM690.0 341.0h1v1h-1zM685.5 341.3h1v1h-1zM684.0 355.7h1v1h-1zM689.1 372.0h1v1h-1zM666.0 320.5h1v1h-1zM683.5 358.6h1v1h-1zM657.7 305.4h1v1h-1zM678.8 333.3h1v1h-1zM689.8 343.8h1v1h-1zM649.4 310.9h1v1h-1zM643.9 307.7h1v1h-1zM681.8 328.0h1v1h-1zM684.8 345.1h1v1h-1zM672.2 322.7h1v1h-1zM665.3 310.6h1v1h-1zM691.2 356.4h1v1h-1zM653.1 306.7h1v1h-1zM685.4 353.6h1v1h-1zM692.1 368.0h1v1h-1zM690.3 351.7h1v1h-1zM688.8 341.8h1v1h-1zM651.4 305.4h1v1h-1zM686.2 348.4h1v1h-1zM658.1 320.7h1v1h-1zM686.3 337.6h1v1h-1zM659.3 318.8h1v1h-1zM654.7 318.0h1v1h-1zM691.1 344.2h1v1h-1zM683.6 358.3h1v1h-1zM677.7 350.0h1v1h-1zM683.2 361.7h1v1h-1zM638.8 302.9h1v1h-1zM649.4 312.0h1v1h-1zM643.4 307.0h1v1h-1zM683.9 333.2h1v1h-1zM643.0 300.6h1v1h-1zM646.8 311.8h1v1h-1zM680.0 342.9h1v1h-1zM667.1 317.7h1v1h-1zM660.0 308.1h1v1h-1zM659.6 307.0h1v1h-1zM686.5 358.8h1v1h-1zM641.9 301.1h1v1h-1zM640.8 305.3h1v1h-1zM667.2 329.4h1v1h-1zM685.8 340.8h1v1h-1zM679.4 338.7h1v1h-1zM678.7 331.1h1v1h-1zM661.4 307.5h1v1h-1zM688.8 377.8h1v1h-1zM682.2 372.9h1v1h-1zM677.7 374.1h1v1h-1zM670.9 332.4h1v1h-1zM676.7 325.4h1v1h-1zM683.9 349.4h1v1h-1zM663.8 322.9h1v1h-1zM668.7 325.7h1v1h-1zM657.4 307.7h1v1h-1zM676.9 332.7h1v1h-1zM657.5 308.3h1v1h-1zM654.0 314.4h1v1h-1zM682.7 334.4h1v1h-1zM688.5 375.3h1v1h-1zM691.7 373.3h1v1h-1zM688.3 349.9h1v1h-1zM642.7 310.8h1v1h-1zM640.4 299.4h1v1h-1zM686.9 350.1h1v1h-1zM660.0 316.4h1v1h-1zM653.9 307.8h1v1h-1zM681.2 375.5h1v1h-1zM641.0 310.8h1v1h-1zM672.5 315.5h1v1h-1zM685.2 358.4h1v1h-1zM645.4 313.3h1v1h-1zM654.0 305.2h1v1h-1zM681.8 324.0h1v1h-1zM690.3 369.2h1v1h-1zM679.9 326.0h1v1h-1zM647.5 314.1h1v1h-1zM680.0 336.1h1v1h-1zM654.9 315.2h1v1h-1zM641.4 298.9h1v1h-1zM691.6 347.9h1v1h-1zM683.5 375.0h1v1h-1zM666.6 516.0h1v1h-1zM673.5 511.8h1v1h-1zM629.8 530.3h1v1h-1zM630.2 521.5h1v1h-1zM643.5 522.6h1v1h-1zM674.7 512.8h1v1h-1zM648.6 520.7h1v1h-1zM677.9 517.1h1v1h-1zM624.1 530.3h1v1h-1zM659.0 509.4h1v1h-1zM648.5 513.4h1v1h-1zM632.0 525.2h1v1h-1zM678.3 519.2h1v1h-1zM623.7 526.3h1v1h-1zM628.0 528.9h1v1h-1zM646.6 514.4h1v1h-1zM659.9 511.5h1v1h-1zM647.0 520.7h1v1h-1zM665.5 519.8h1v1h-1zM648.1 516.4h1v1h-1zM662.6 511.6h1v1h-1zM631.4 519.8h1v1h-1zM663.8 514.6h1v1h-1zM623.5 521.6h1v1h-1zM657.3 519.3h1v1h-1zM629.3 516.4h1v1h-1zM632.4 522.9h1v1h-1zM671.6 511.6h1v1h-1zM659.7 511.1h1v1h-1zM624.6 533.8h1v1h-1zM685.2 516.9h1v1h-1zM625.0 534.2h1v1h-1zM629.8 516.9h1v1h-1zM630.0 520.4h1v1h-1zM681.2 517.1h1v1h-1zM678.6 520.9h1v1h-1zM630.7 529.4h1v1h-1zM667.7 519.6h1v1h-1zM684.5 517.8h1v1h-1zM627.0 520.4h1v1h-1zM627.6 524.3h1v1h-1zM622.2 524.5h1v1h-1zM679.6 512.9h1v1h-1zM616.0 529.7h1v1h-1zM653.6 510.4h1v1h-1zM649.9 513.3h1v1h-1zM656.6 510.5h1v1h-1zM626.7 532.3h1v1h-1zM653.5 516.8h1v1h-1zM644.6 522.2h1v1h-1zM666.7 520.4h1v1h-1zM674.7 512.5h1v1h-1zM648.0 519.8h1v1h-1zM660.7 517.5h1v1h-1zM646.2 520.4h1v1h-1zM683.8 519.6h1v1h-1zM641.5 522.2h1v1h-1zM667.2 510.4h1v1h-1zM673.5 521.1h1v1h-1zM641.5 519.5h1v1h-1zM668.1 519.1h1v1h-1zM657.5 508.3h1v1h-1zM668.2 520.8h1v1h-1zM626.1 531.9h1v1h-1zM664.0 513.1h1v1h-1zM651.5 515.1h1v1h-1zM643.0 515.1h1v1h-1zM660.9 509.0h1v1h-1zM667.3 511.1h1v1h-1zM680.9 514.4h1v1h-1zM664.9 520.0h1v1h-1zM663.4 510.0h1v1h-1zM643.9 511.5h1v1h-1zM625.6 519.4h1v1h-1zM645.2 513.3h1v1h-1zM634.4 522.9h1v1h-1zM640.2 519.8h1v1h-1zM624.4 528.1h1v1h-1zM684.7 518.7h1v1h-1zM681.9 515.8h1v1h-1zM675.9 510.6h1v1h-1zM667.7 517.5h1v1h-1zM633.5 521.9h1v1h-1zM622.6 533.6h1v1h-1zM679.4 512.7h1v1h-1zM636.8 515.4h1v1h-1zM670.8 510.6h1v1h-1zM671.3 515.1h1v1h-1zM621.9 524.2h1v1h-1zM636.5 517.5h1v1h-1zM640.5 516.9h1v1h-1zM680.9 523.4h1v1h-1zM652.0 512.7h1v1h-1zM652.1 509.2h1v1h-1zM642.0 511.6h1v1h-1zM664.2 508.6h1v1h-1zM626.0 530.4h1v1h-1zM633.2 515.3h1v1h-1zM622.0 533.7h1v1h-1zM666.3 508.6h1v1h-1zM628.9 524.5h1v1h-1zM663.7 511.9h1v1h-1zM668.3 511.7h1v1h-1zM634.4 523.5h1v1h-1zM618.8 529.5h1v1h-1zM632.1 524.9h1v1h-1zM683.5 518.2h1v1h-1zM656.5 512.2h1v1h-1zM656.9 511.7h1v1h-1zM638.7 523.9h1v1h-1zM626.6 533.1h1v1h-1zM641.8 521.5h1v1h-1zM625.0 526.8h1v1h-1zM684.1 517.9h1v1h-1zM633.0 517.3h1v1h-1zM631.4 527.7h1v1h-1zM636.9 520.1h1v1h-1zM663.6 514.9h1v1h-1zM665.8 519.4h1v1h-1zM679.8 520.4h1v1h-1zM672.2 521.6h1v1h-1zM672.7 519.2h1v1h-1zM676.6 513.2h1v1h-1zM662.1 516.8h1v1h-1zM622.4 534.5h1v1h-1zM677.2 521.7h1v1h-1zM661.5 513.0h1v1h-1zM661.4 517.9h1v1h-1zM629.6 529.1h1v1h-1zM683.2 521.6h1v1h-1zM661.0 513.2h1v1h-1zM634.1 526.4h1v1h-1zM616.7 529.0h1v1h-1zM622.3 521.6h1v1h-1zM639.5 514.9h1v1h-1zM624.2 522.9h1v1h-1zM633.9 522.3h1v1h-1zM652.3 519.1h1v1h-1zM631.1 518.0h1v1h-1zM635.9 521.0h1v1h-1z" fill="#e60000"/>
<path d="M809.4,404.5L915.9,399.0L925.3,491.5L828.2,504.0Z M823.5,414.0L833.7,493.0L910.4,479.0L904.1,409.3Z" fill="#e60000" fill-rule="evenodd"/>
<path d="M742.0,466.0L940.0,427.0" stroke="#c8b860" stroke-width="1" fill="none" />
<path d="M945.9 400.7h1.3v1.3h-1.3zM948.4 441.8h1.3v1.3h-1.3zM935.0 441.0h1.3v1.3h-1.3zM935.0 395.7h1.3v1.3h-1.3zM948.1 414.9h1.3v1.3h-1.3zM931.2 373.1h1.3v1.3h-1.3zM945.3 429.3h1.3v1.3h-1.3zM938.6 427.6h1.3v1.3h-1.3zM923.6 433.8h1.3v1.3h-1.3zM950.8 430.3h1.3v1.3h-1.3zM936.4 424.4h1.3v1.3h-1.3zM946.8 454.1h1.3v1.3h-1.3zM948.9 429.6h1.3v1.3h-1.3zM934.9 447.9h1.3v1.3h-1.3zM927.5 407.2h1.3v1.3h-1.3zM949.0 470.8h1.3v1.3h-1.3zM918.9 398.7h1.3v1.3h-1.3zM928.9 408.2h1.3v1.3h-1.3zM933.4 409.3h1.3v1.3h-1.3zM958.4 474.7h1.3v1.3h-1.3zM946.4 434.1h1.3v1.3h-1.3zM941.9 489.8h1.3v1.3h-1.3zM923.0 433.8h1.3v1.3h-1.3zM958.7 436.9h1.3v1.3h-1.3zM941.1 440.5h1.3v1.3h-1.3zM938.1 397.7h1.3v1.3h-1.3zM941.9 481.0h1.3v1.3h-1.3zM945.9 426.0h1.3v1.3h-1.3zM935.4 392.4h1.3v1.3h-1.3zM960.6 427.2h1.3v1.3h-1.3zM944.0 384.8h1.3v1.3h-1.3zM946.6 457.1h1.3v1.3h-1.3zM928.9 395.3h1.3v1.3h-1.3zM960.5 464.8h1.3v1.3h-1.3zM955.0 405.5h1.3v1.3h-1.3zM924.6 469.8h1.3v1.3h-1.3zM949.2 441.6h1.3v1.3h-1.3zM920.4 384.7h1.3v1.3h-1.3zM953.5 432.3h1.3v1.3h-1.3zM959.7 429.2h1.3v1.3h-1.3zM950.8 437.1h1.3v1.3h-1.3zM944.9 382.3h1.3v1.3h-1.3zM958.2 410.7h1.3v1.3h-1.3zM944.0 417.7h1.3v1.3h-1.3zM954.7 415.0h1.3v1.3h-1.3zM928.4 427.2h1.3v1.3h-1.3zM960.4 410.9h1.3v1.3h-1.3zM932.6 419.9h1.3v1.3h-1.3zM949.7 404.6h1.3v1.3h-1.3zM960.5 421.9h1.3v1.3h-1.3zM950.3 497.6h1.3v1.3h-1.3zM938.8 449.6h1.3v1.3h-1.3zM933.5 459.2h1.3v1.3h-1.3zM958.4 426.2h1.3v1.3h-1.3zM958.8 469.9h1.3v1.3h-1.3zM934.0 422.0h1.3v1.3h-1.3zM927.8 432.9h1.3v1.3h-1.3zM943.2 406.1h1.3v1.3h-1.3zM945.4 437.2h1.3v1.3h-1.3zM952.7 417.8h1.3v1.3h-1.3zM956.1 449.7h1.3v1.3h-1.3zM919.5 391.4h1.3v1.3h-1.3zM954.6 429.7h1.3v1.3h-1.3zM954.2 456.6h1.3v1.3h-1.3zM931.3 431.1h1.3v1.3h-1.3zM960.7 393.5h1.3v1.3h-1.3zM934.4 364.1h1.3v1.3h-1.3zM958.4 411.1h1.3v1.3h-1.3zM928.6 443.2h1.3v1.3h-1.3zM956.5 424.7h1.3v1.3h-1.3zM936.1 498.0h1.3v1.3h-1.3zM955.0 399.2h1.3v1.3h-1.3zM918.2 411.3h1.3v1.3h-1.3zM952.1 381.1h1.3v1.3h-1.3zM938.1 420.8h1.3v1.3h-1.3zM945.8 465.9h1.3v1.3h-1.3zM923.4 394.2h1.3v1.3h-1.3zM931.7 376.4h1.3v1.3h-1.3zM945.0 451.4h1.3v1.3h-1.3zM954.0 463.9h1.3v1.3h-1.3zM944.6 444.0h1.3v1.3h-1.3zM933.6 449.2h1.3v1.3h-1.3zM942.6 411.5h1.3v1.3h-1.3zM943.9 380.1h1.3v1.3h-1.3zM924.4 429.9h1.3v1.3h-1.3zM945.6 418.0h1.3v1.3h-1.3zM924.2 429.0h1.3v1.3h-1.3zM939.9 380.1h1.3v1.3h-1.3zM960.0 490.5h1.3v1.3h-1.3zM947.3 400.7h1.3v1.3h-1.3zM918.1 453.9h1.3v1.3h-1.3zM914.9 463.4h1.3v1.3h-1.3zM953.2 409.2h1.3v1.3h-1.3zM943.8 393.8h1.3v1.3h-1.3zM932.6 378.2h1.3v1.3h-1.3zM951.9 437.3h1.3v1.3h-1.3zM947.4 445.0h1.3v1.3h-1.3zM952.4 425.6h1.3v1.3h-1.3zM932.8 439.4h1.3v1.3h-1.3zM958.0 440.6h1.3v1.3h-1.3zM933.4 408.9h1.3v1.3h-1.3zM940.8 391.1h1.3v1.3h-1.3zM952.2 452.7h1.3v1.3h-1.3zM930.6 427.0h1.3v1.3h-1.3zM920.5 478.1h1.3v1.3h-1.3zM947.8 365.3h1.3v1.3h-1.3zM932.5 388.8h1.3v1.3h-1.3zM934.8 347.0h1.3v1.3h-1.3zM952.9 470.3h1.3v1.3h-1.3zM941.6 443.9h1.3v1.3h-1.3zM953.3 385.4h1.3v1.3h-1.3zM945.6 372.4h1.3v1.3h-1.3zM945.8 426.9h1.3v1.3h-1.3zM923.0 411.5h1.3v1.3h-1.3zM944.3 433.3h1.3v1.3h-1.3zM953.6 422.6h1.3v1.3h-1.3zM944.6 419.5h1.3v1.3h-1.3zM946.4 445.4h1.3v1.3h-1.3zM935.0 336.1h1.3v1.3h-1.3zM951.8 423.8h1.3v1.3h-1.3zM930.2 390.3h1.3v1.3h-1.3zM936.3 453.3h1.3v1.3h-1.3zM938.8 450.2h1.3v1.3h-1.3zM934.3 425.1h1.3v1.3h-1.3zM950.5 426.3h1.3v1.3h-1.3zM948.2 433.2h1.3v1.3h-1.3zM929.6 389.4h1.3v1.3h-1.3zM943.0 475.0h1.3v1.3h-1.3zM943.3 394.8h1.3v1.3h-1.3zM936.0 423.0h1.3v1.3h-1.3zM926.8 405.4h1.3v1.3h-1.3zM957.2 459.9h1.3v1.3h-1.3zM928.3 453.5h1.3v1.3h-1.3zM948.2 475.1h1.3v1.3h-1.3zM947.0 409.4h1.3v1.3h-1.3zM937.2 411.9h1.3v1.3h-1.3zM938.4 369.7h1.3v1.3h-1.3zM947.6 401.0h1.3v1.3h-1.3zM944.8 446.5h1.3v1.3h-1.3zM950.9 437.0h1.3v1.3h-1.3zM939.2 414.9h1.3v1.3h-1.3zM938.1 405.4h1.3v1.3h-1.3zM944.2 453.4h1.3v1.3h-1.3zM923.0 412.0h1.3v1.3h-1.3zM932.7 431.3h1.3v1.3h-1.3zM939.9 463.5h1.3v1.3h-1.3zM938.0 383.4h1.3v1.3h-1.3zM952.7 410.3h1.3v1.3h-1.3zM937.3 463.0h1.3v1.3h-1.3zM944.4 439.5h1.3v1.3h-1.3zM948.6 473.0h1.3v1.3h-1.3zM955.3 379.8h1.3v1.3h-1.3zM935.8 408.3h1.3v1.3h-1.3zM936.1 465.9h1.3v1.3h-1.3zM928.1 436.1h1.3v1.3h-1.3zM930.3 432.9h1.3v1.3h-1.3zM941.2 396.4h1.3v1.3h-1.3zM947.3 436.3h1.3v1.3h-1.3zM928.0 420.4h1.3v1.3h-1.3zM930.5 458.1h1.3v1.3h-1.3zM921.2 412.5h1.3v1.3h-1.3zM949.2 429.1h1.3v1.3h-1.3zM932.8 444.5h1.3v1.3h-1.3zM944.7 466.6h1.3v1.3h-1.3zM947.2 447.9h1.3v1.3h-1.3zM923.1 428.9h1.3v1.3h-1.3zM946.7 393.3h1.3v1.3h-1.3zM914.7 444.5h1.3v1.3h-1.3zM928.7 405.2h1.3v1.3h-1.3zM925.8 433.7h1.3v1.3h-1.3zM944.3 430.1h1.3v1.3h-1.3zM929.5 414.2h1.3v1.3h-1.3zM926.0 430.9h1.3v1.3h-1.3zM943.4 432.8h1.3v1.3h-1.3zM945.1 370.5h1.3v1.3h-1.3zM939.5 426.9h1.3v1.3h-1.3zM940.1 430.2h1.3v1.3h-1.3zM949.4 419.8h1.3v1.3h-1.3zM939.3 471.8h1.3v1.3h-1.3zM949.4 432.7h1.3v1.3h-1.3zM952.6 429.7h1.3v1.3h-1.3zM919.0 410.7h1.3v1.3h-1.3zM949.2 438.2h1.3v1.3h-1.3zM946.4 390.5h1.3v1.3h-1.3zM941.2 435.1h1.3v1.3h-1.3zM946.7 502.0h1.3v1.3h-1.3zM953.1 437.6h1.3v1.3h-1.3zM943.3 358.8h1.3v1.3h-1.3zM958.1 402.8h1.3v1.3h-1.3zM935.1 411.0h1.3v1.3h-1.3zM923.3 432.3h1.3v1.3h-1.3zM944.3 406.3h1.3v1.3h-1.3zM957.2 492.9h1.3v1.3h-1.3zM936.9 456.2h1.3v1.3h-1.3zM945.1 445.0h1.3v1.3h-1.3zM917.0 439.6h1.3v1.3h-1.3zM952.5 401.1h1.3v1.3h-1.3zM955.8 465.9h1.3v1.3h-1.3zM940.1 438.2h1.3v1.3h-1.3zM922.3 449.3h1.3v1.3h-1.3zM956.9 392.3h1.3v1.3h-1.3zM946.2 425.3h1.3v1.3h-1.3zM936.4 378.3h1.3v1.3h-1.3zM960.0 376.8h1.3v1.3h-1.3zM943.7 450.5h1.3v1.3h-1.3zM935.8 441.8h1.3v1.3h-1.3zM940.1 432.0h1.3v1.3h-1.3zM949.4 487.1h1.3v1.3h-1.3zM928.2 444.7h1.3v1.3h-1.3zM933.6 389.2h1.3v1.3h-1.3zM959.7 395.8h1.3v1.3h-1.3zM941.8 372.2h1.3v1.3h-1.3zM949.1 400.8h1.3v1.3h-1.3zM937.4 397.6h1.3v1.3h-1.3zM949.0 408.4h1.3v1.3h-1.3zM932.7 415.4h1.3v1.3h-1.3zM950.5 397.1h1.3v1.3h-1.3zM960.1 373.6h1.3v1.3h-1.3zM950.5 410.7h1.3v1.3h-1.3zM948.7 403.3h1.3v1.3h-1.3z" fill="#3cd03c"/>
<circle cx="942" cy="424" r="14" stroke="#3cd03c" stroke-width="1" fill="none"/>
<path d="M941.0,400.0L950.0,424.0" stroke="#a01818" stroke-width="2" fill="none" />
<path d="M936.0,412.0L942.0,429.0" stroke="#a01818" stroke-width="2" fill="none" />
<path d="M953.0,404.0L959.0,421.0" stroke="#2030a0" stroke-width="2" fill="none" />
<path d="M923.0,433.0L948.0,424.0" stroke="#3cd03c" stroke-width="2" fill="none" />
<path d="M727.1,441.2L729.6,460.4" stroke="#c01020" stroke-width="2" fill="none" />
<path d="M729.6,460.4L710.8,461.8" stroke="#20e020" stroke-width="2" fill="none" />
<path d="M731.5,448.8L732.5,467.6" stroke="#c01020" stroke-width="2" fill="none" />
<path d="M732.5,467.6L713.7,469.0" stroke="#20e020" stroke-width="2" fill="none" />
<path d="M735.0,468.0L742.0,463.0L742.0,469.0Z" fill="#d02060" />
</svg>
<div class="t" style="left:1230px;top:808px;font-size:14.5px">10 fps</div>
</body></html>
